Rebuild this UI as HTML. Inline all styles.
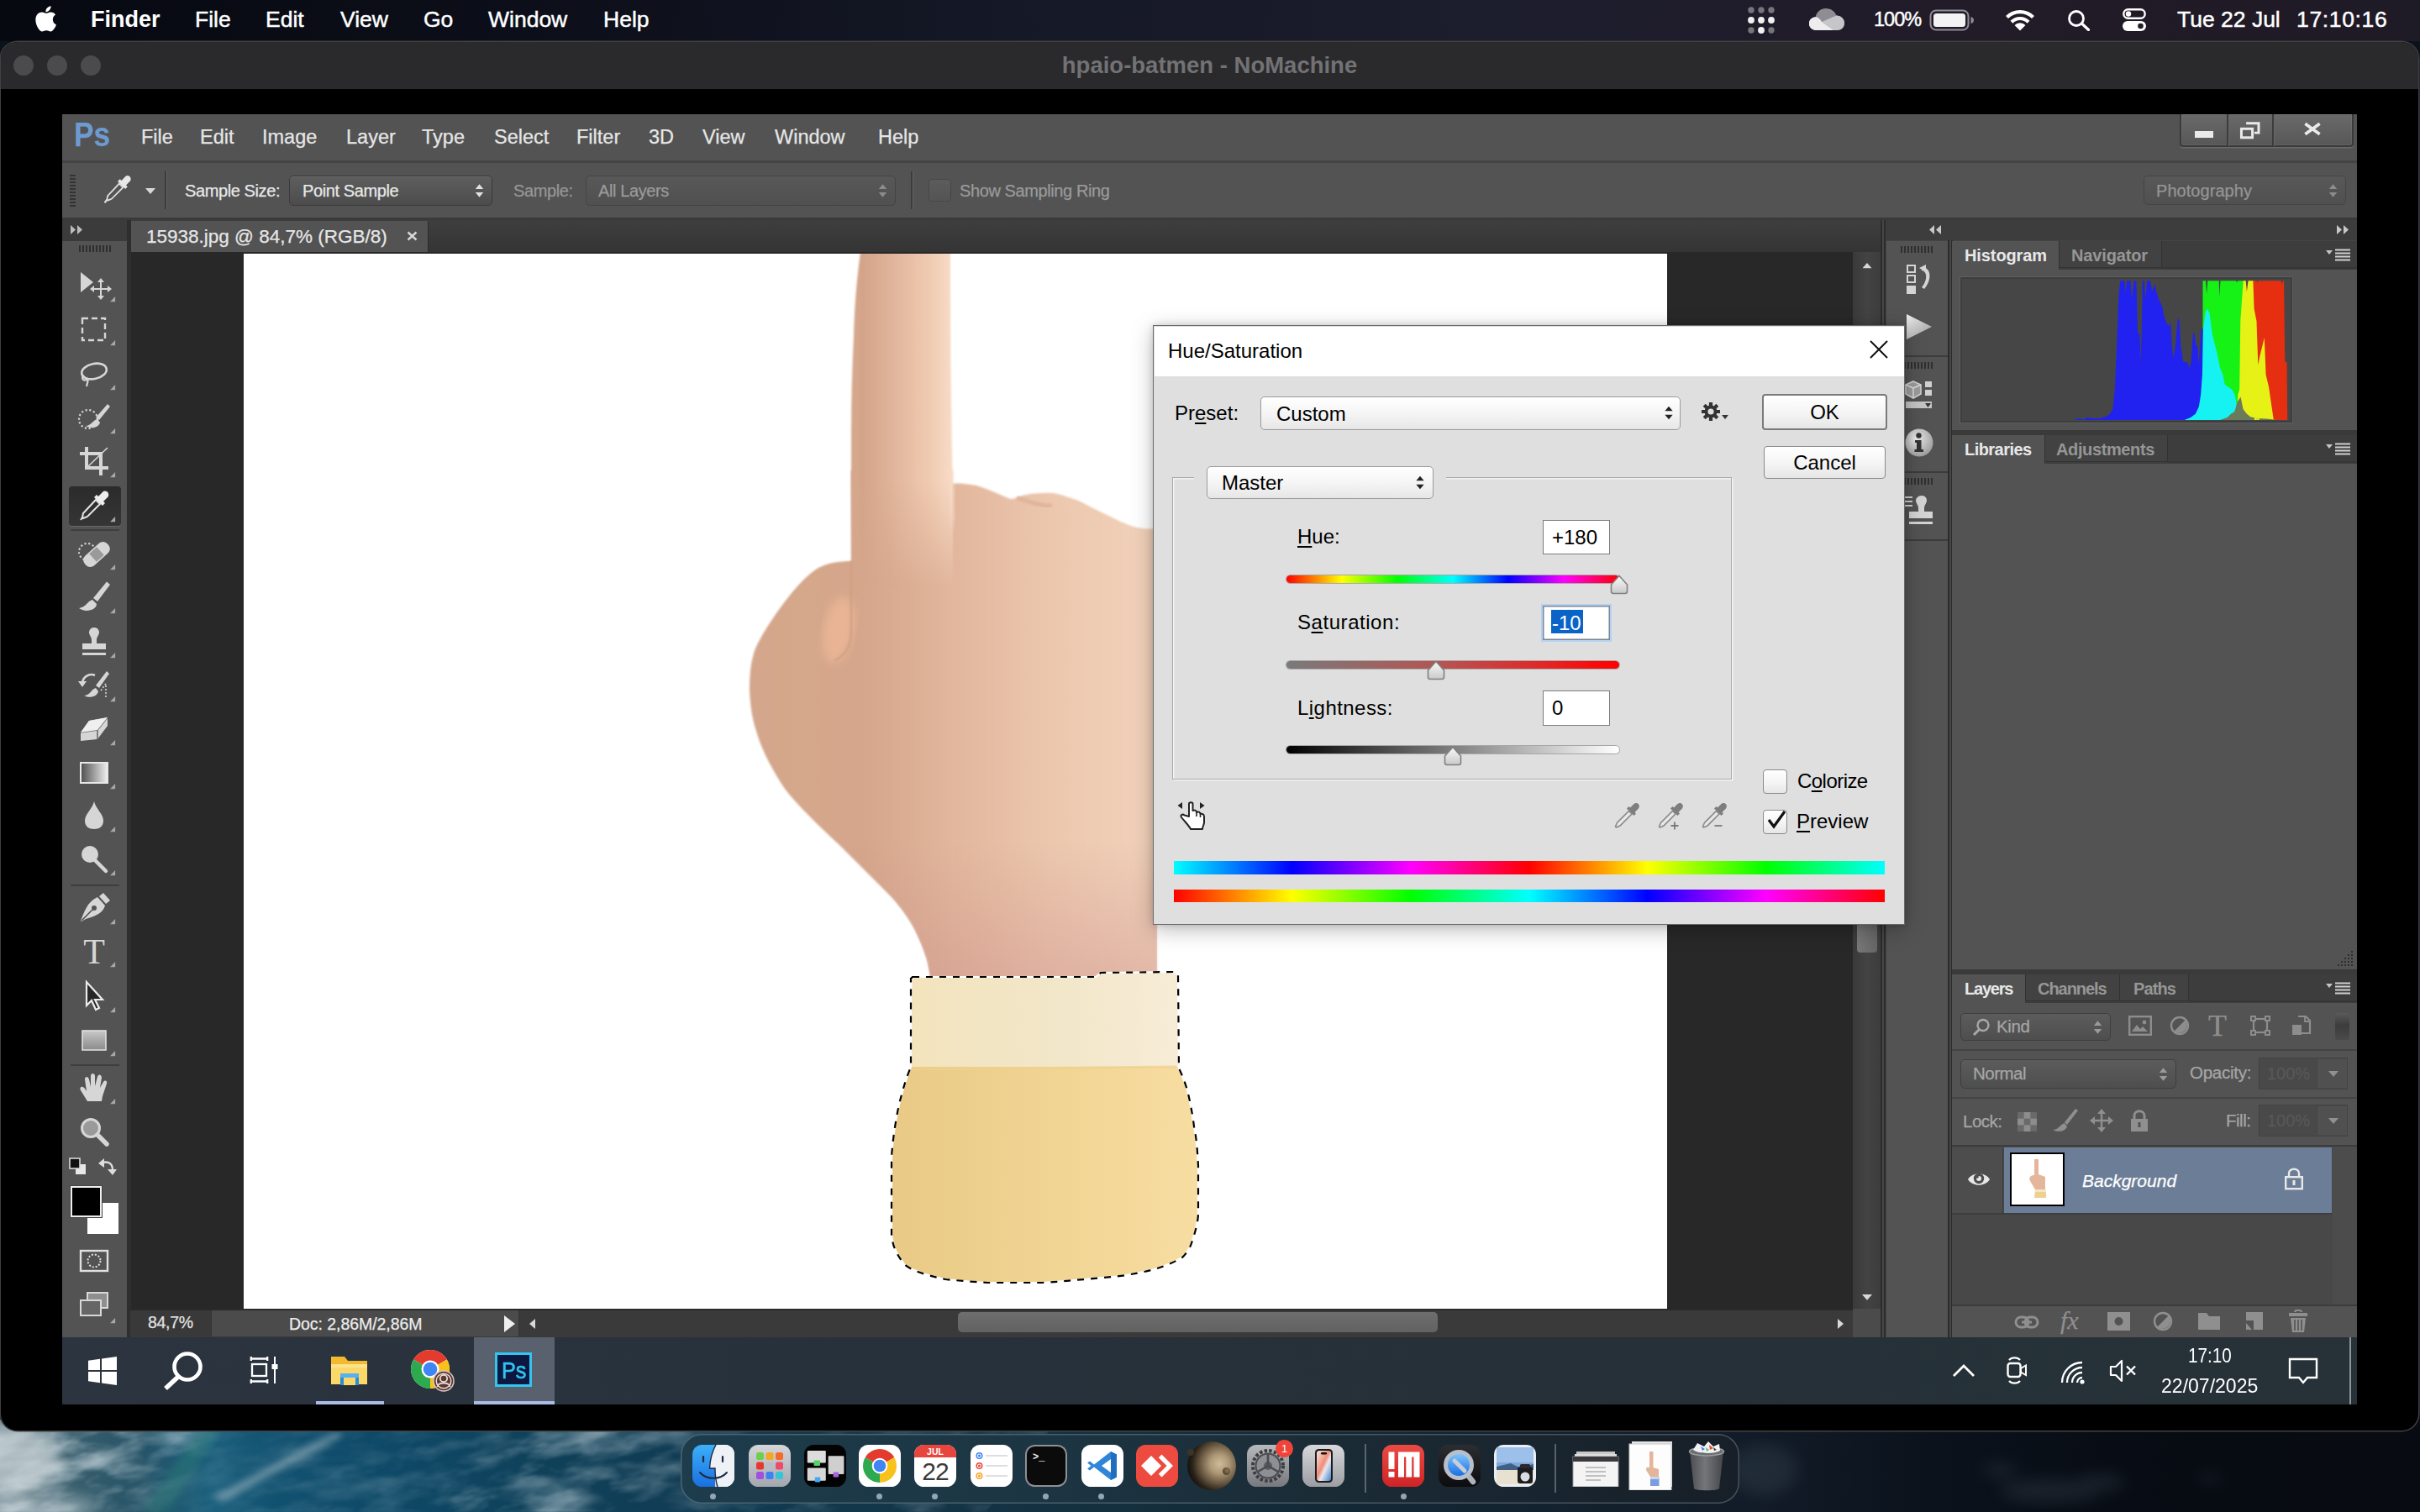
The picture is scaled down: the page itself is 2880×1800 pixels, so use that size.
<!DOCTYPE html>
<html><head><meta charset="utf-8"><title>ps</title>
<style>
*{box-sizing:border-box;margin:0;padding:0}
html,body{width:2880px;height:1800px;overflow:hidden;background:#0a1018;font-family:"Liberation Sans",sans-serif}
.a{position:absolute}
.t{position:absolute;white-space:nowrap;line-height:1}
/* mac */
#wall{left:0;top:0;width:2880px;height:1800px;background:#0b121c}
#macbar{left:0;top:0;width:2880px;height:49px;background:linear-gradient(90deg,#070911 0%,#0c0e19 22%,#151826 42%,#1c1d2d 62%,#221b28 82%,#1e1a26 100%)}
#macbar .t{color:#fff;font-size:26.5px;top:10px;-webkit-text-stroke:.45px #fff}
#nm{left:1px;top:50px;width:2877px;height:1653px;background:#000;border-radius:20px;overflow:hidden;box-shadow:0 0 0 1.5px #414143}
#nmtitle{left:0;top:0;width:100%;height:56px;background:#2a2a2c}
.tl{width:24px;height:24px;border-radius:50%;background:#4b4b4d;top:16px}
/* ps */
#ps{left:74px;top:136px;width:2731px;height:1536px;background:#535353;overflow:hidden}
#ps .t{color:#dcdcdc}
</style></head><body>
<div id="wall" class="a"></div>
<div class="a" style="left:0;top:1690px;width:2880px;height:110px;overflow:hidden;background:linear-gradient(90deg,#5b7480 0,#3a5e6c 70px,#265468 170px,#1a5f7c 250px,#115170 330px,#0e4866 480px,#0f415a 640px,#113c54 811px,#14303e 1300px,#121c28 2068px,#0b121c 2300px,#070b12 2600px,#080b12 2880px)">
<svg class="a" style="left:0;top:0" width="2880" height="110" viewBox="0 0 2880 110"><defs>
<filter id="cl1" x="0" y="0" width="100%" height="100%"><feTurbulence type="fractalNoise" baseFrequency="0.011 0.03" numOctaves="5" seed="7"/><feColorMatrix type="matrix" values="0 0 0 0 0.72  0 0 0 0 0.80  0 0 0 0 0.83  2.300 0 0 0 -1.020"/><feGaussianBlur stdDeviation="1.200"/></filter>
<filter id="cl2" x="0" y="0" width="100%" height="100%"><feTurbulence type="fractalNoise" baseFrequency="0.02 0.045" numOctaves="4" seed="3"/><feColorMatrix type="matrix" values="0 0 0 0 0.55  0 0 0 0 0.66  0 0 0 0 0.72  2.200 0 0 0 -1.080"/><feGaussianBlur stdDeviation="1"/></filter>
<filter id="wb2"><feGaussianBlur stdDeviation="4"/></filter><filter id="wb"><feGaussianBlur stdDeviation="9"/></filter>
<linearGradient id="m1g" gradientUnits="userSpaceOnUse" x1="0" y1="0" x2="820" y2="0"><stop offset="0" stop-color="#fff"/><stop offset=".1" stop-color="#ddd"/><stop offset=".2" stop-color="#888"/><stop offset=".27" stop-color="#222"/><stop offset=".5" stop-color="#333"/><stop offset=".62" stop-color="#444"/><stop offset=".72" stop-color="#8a8a8a"/><stop offset=".88" stop-color="#7a7a7a"/><stop offset="1" stop-color="#444"/></linearGradient>
<mask id="m1" maskUnits="userSpaceOnUse" x="-200" y="0" width="1400" height="110"><rect x="-200" width="1400" height="110" fill="url(#m1g)"/></mask>
</defs>
<g transform="skewX(-38)"><g transform="translate(60 0)">
<rect x="-200" y="0" width="1400" height="110" filter="url(#cl1)" mask="url(#m1)"/>
<rect x="-200" y="0" width="1400" height="110" filter="url(#cl2)" mask="url(#m1)" opacity=".8"/>
</g></g>
<g filter="url(#wb)" fill="#c4cfd3"><ellipse cx="10" cy="45" rx="60" ry="40" opacity=".75"/><ellipse cx="50" cy="104" rx="70" ry="16" opacity=".5"/></g>
<path d="M168,110 L238,12 L262,12 L200,110 Z" fill="#2f8078" opacity=".4" filter="url(#wb2)"/>
<g filter="url(#wb2)" fill="#d4dcde"><path d="M252,92 L400,14 L408,19 L266,98 Z" opacity=".42"/></g>
<g filter="url(#wb)" fill="#5a6a78" opacity=".2"><ellipse cx="2440" cy="85" rx="60" ry="14"/><ellipse cx="2500" cy="75" rx="30" ry="10"/><ellipse cx="2380" cy="60" rx="20" ry="8"/><ellipse cx="2630" cy="70" rx="14" ry="6"/><ellipse cx="2100" cy="60" rx="40" ry="30"/></g>
</svg></div>
<div id="macbar" class="a">
<svg class="a" style="left:40px;top:6px" width="30" height="34" viewBox="0 0 170 200"><path fill="#fff" d="M150.4,68.2c-1,0.8-19.2,11-19.2,33.8c0,26.300,23.1,35.600,23.800,35.900c-0.1,0.600-3.700,12.800-12.200,25.200c-7.600,10.900-15.500,21.800-27.600,21.800s-15.200-7-29.100-7c-13.600,0-18.400,7.200-29.400,7.200s-18.700-10.100-27.600-22.500C18.800,147.900,10.500,125,10.500,103.300c0-34.800,22.600-53.300,44.900-53.300c11.800,0,21.700,7.800,29.100,7.800c7.100,0,18.100-8.200,31.600-8.200C121.200,49.600,139.600,50.100,150.400,68.200z M108.500,35.700c5.600-6.600,9.500-15.800,9.500-25c0-1.300-0.100-2.600-0.300-3.600c-9.100,0.300-19.900,6-26.400,13.600c-5.100,5.800-9.900,15-9.900,24.300c0,1.400,0.200,2.800,0.300,3.200c0.600,0.100,1.500,0.200,2.400,0.200C92.200,48.400,102.500,42.900,108.500,35.700z"/></svg>
<div class="t" style="left:108px;font-weight:bold;font-size:27px;-webkit-text-stroke:0">Finder</div>
<div class="t" style="left:232px">File</div>
<div class="t" style="left:316px">Edit</div>
<div class="t" style="left:405px">View</div>
<div class="t" style="left:504px">Go</div>
<div class="t" style="left:581px">Window</div>
<div class="t" style="left:718px">Help</div>
<svg class="a" style="left:2076px;top:4px" width="40" height="40" viewBox="0 0 40 40"><g fill="#77747c"><circle cx="8" cy="8" r="3.7"/><circle cx="20" cy="8" r="3.7"/><circle cx="32" cy="8" r="3.7"/><circle cx="8" cy="32" r="3.7"/><circle cx="32" cy="32" r="3.7"/></g><g fill="#f2f2f2"><circle cx="8" cy="20" r="3.9"/><circle cx="20" cy="20" r="3.9"/><circle cx="32" cy="20" r="3.9"/><circle cx="20" cy="32" r="3.9"/></g></svg>
<svg class="a" style="left:2152px;top:8px" width="44" height="30" viewBox="0 0 44 30"><path d="M10,28 C4,28 1,24 1,20 C1,15.500 4.500,12.500 8.500,12.500 C10,6 15,2 21,2 C27,2 31.500,5.500 33.500,10.500 C39,10.500 43,14.500 43,19.500 C43,24.500 39,28 34,28 Z" fill="#8f8c93"/><path d="M10,28 C4,28 1,24 1,20 C1,16.500 3,14 6,13 L30,28 Z" fill="#e4e4e6"/><path d="M16,18 L33.500,10.500 C39,10.500 43,14.500 43,19.500 C43,24.500 39,28 34,28 L30,28 Z" fill="#c6c5c9"/><path d="M4,14 C8,11 13,12 16,18 L30,28 L10,28 C4,28 1,24 1,20 C1,17 2,15.500 4,14Z" fill="#ededee"/></svg>
<div class="t" style="left:2230px;font-size:23.5px;top:12px;letter-spacing:-1px">100%</div>
<svg class="a" style="left:2296px;top:11px" width="54" height="26" viewBox="0 0 54 26"><rect x="1.500" y="1.500" width="45" height="23" rx="6.500" fill="none" stroke="#8f8d93" stroke-width="2"/><rect x="5" y="5" width="38" height="16" rx="3.500" fill="#f3f3f3"/><path d="M49.500,9 C52,9.500 53,11.500 53,13 C53,14.500 52,16.500 49.500,17 Z" fill="#8f8d93"/></svg>
<svg class="a" style="left:2386px;top:10px" width="36" height="27" viewBox="0 0 36 27"><g fill="none" stroke="#fff" stroke-linecap="butt"><path d="M2.500,10.500 A22,22 0 0 1 33.500,10.500" stroke-width="4.200"/><path d="M8,16.200 A14,14 0 0 1 28,16.200" stroke-width="4.200"/></g><path d="M18,26.500 L11.500,20 A9,9 0 0 1 24.500,20 Z" fill="#fff"/></svg>
<svg class="a" style="left:2460px;top:11px" width="28" height="26" viewBox="0 0 28 26"><circle cx="11" cy="11" r="8.500" fill="none" stroke="#fff" stroke-width="2.800"/><path d="M17.500,17 L25.500,24.500" stroke="#fff" stroke-width="3.200" stroke-linecap="round"/></svg>
<svg class="a" style="left:2526px;top:10px" width="28" height="27" viewBox="0 0 28 27"><rect x="1.300" y="1.300" width="25.400" height="10.400" rx="5.200" fill="none" stroke="#fff" stroke-width="2.400"/><circle cx="7" cy="6.500" r="3.200" fill="#fff"/><rect x="0" y="15" width="28" height="12" rx="6" fill="#fff"/><circle cx="21.500" cy="21" r="3.300" fill="#231d26"/></svg>
<div class="t" style="left:2591px">Tue 22 Jul</div>
<div class="t" style="left:2733px;letter-spacing:.65px">17:10:16</div>

</div>
<div id="nm" class="a">
 <div id="nmtitle" class="a">
  <div class="a tl" style="left:15px"></div><div class="a tl" style="left:55px"></div><div class="a tl" style="left:95px"></div>
  <div class="t" style="left:0;width:100%;text-align:center;top:14px;font-size:27.5px;font-weight:bold;color:#727274">hpaio-batmen - NoMachine</div>
 </div>
</div>
<div id="ps" class="a">
<div class="a" id="pp" style="left:-74px;top:-136px;width:2880px;height:1800px">
<style>
#pp .t{color:#e8e8e8;-webkit-text-stroke:.25px currentColor}
.ln{position:absolute}
.dd{position:absolute;border-radius:5px;border:1.5px solid #3a3a3a;background:linear-gradient(#5e5e5e,#4c4c4c);box-shadow:inset 0 1px 0 #6c6c6c}
.dd2{position:absolute;border-radius:5px;border:1.5px solid #444;background:linear-gradient(#585858,#505050);}
.ptab{position:absolute;font-weight:bold;font-size:20px;color:#e8e8e8;line-height:1;white-space:nowrap}
.ptab2{position:absolute;font-weight:bold;font-size:20px;color:#969696;line-height:1;white-space:nowrap}
</style>
<!-- menu bar -->
<div class="a" style="left:74px;top:136px;width:2731px;height:56px;background:#535353"></div>
<div class="a" style="left:74px;top:191px;width:2731px;height:3px;background:#444"></div>
<div class="t" style="left:88px;top:140px;font-size:40px;font-weight:bold;color:#6d9bd1;transform:scaleX(.88);transform-origin:0 0">Ps</div>
<div class="t ml" style="left:168px">File</div>
<div class="t ml" style="left:238px">Edit</div>
<div class="t ml" style="left:312px">Image</div>
<div class="t ml" style="left:412px">Layer</div>
<div class="t ml" style="left:502px">Type</div>
<div class="t ml" style="left:588px">Select</div>
<div class="t ml" style="left:686px">Filter</div>
<div class="t ml" style="left:772px">3D</div>
<div class="t ml" style="left:836px">View</div>
<div class="t ml" style="left:922px">Window</div>
<div class="t ml" style="left:1045px">Help</div>
<style>.ml{top:152px;font-size:23.5px;color:#e6e6e6 !important;-webkit-text-stroke:.3px #e6e6e6}</style>
<!-- options bar -->
<div class="a" style="left:74px;top:194px;width:2731px;height:66px;background:#535353"></div>
<div class="a" style="left:74px;top:259px;width:2731px;height:3px;background:#3a3a3a"></div>
<!-- tab row -->
<div class="a" style="left:74px;top:262px;width:2170px;height:39px;background:linear-gradient(#3e3e3e,#343434)"></div>
<div class="a" style="left:156px;top:263px;width:354px;height:38px;background:#535353;border-right:1px solid #2c2c2c"></div>
<div class="t" style="left:174px;top:271px;font-size:22.5px;color:#e6e6e6">15938.jpg @ 84,7% (RGB/8)</div>
<!-- canvas area -->
<div class="a" style="left:155px;top:300px;width:2084px;height:1258px;background:#282828"></div>
<div class="a" style="left:290px;top:302px;width:1694px;height:1256px;background:#fff"></div>
<svg class="a" style="left:290px;top:302px" width="1694" height="1256" viewBox="290 302 1694 1256">
<defs>
<linearGradient id="gsk" gradientUnits="userSpaceOnUse" x1="892" y1="0" x2="1380" y2="0">
<stop offset="0" stop-color="#d4a78c"/><stop offset=".28" stop-color="#d5a68b"/><stop offset=".5" stop-color="#e2b79d"/><stop offset=".75" stop-color="#ecc8af"/><stop offset="1" stop-color="#f2d2bb"/></linearGradient>
<linearGradient id="gfi" gradientUnits="userSpaceOnUse" x1="1012" y1="0" x2="1134" y2="0">
<stop offset="0" stop-color="#d6a98e"/><stop offset=".12" stop-color="#d3a489"/><stop offset=".45" stop-color="#e2b79d"/><stop offset=".8" stop-color="#f1cdb4"/><stop offset="1" stop-color="#f8dcc8"/></linearGradient>
<linearGradient id="gwr" gradientUnits="userSpaceOnUse" x1="0" y1="1000" x2="0" y2="1165">
<stop offset="0" stop-color="#c98c88" stop-opacity="0"/><stop offset="1" stop-color="#c98c88" stop-opacity=".38"/></linearGradient>
<linearGradient id="gcu" gradientUnits="userSpaceOnUse" x1="1085" y1="0" x2="1402" y2="0">
<stop offset="0" stop-color="#f3e4bd"/><stop offset=".5" stop-color="#f2e6c8"/><stop offset="1" stop-color="#f7ecd6"/></linearGradient>
<linearGradient id="gsl" gradientUnits="userSpaceOnUse" x1="1060" y1="0" x2="1427" y2="0">
<stop offset="0" stop-color="#e9c985"/><stop offset=".5" stop-color="#f0d493"/><stop offset="1" stop-color="#f8dda2"/></linearGradient>
<radialGradient id="gcr" gradientUnits="userSpaceOnUse" cx="1000" cy="760" r="34">
<stop offset="0" stop-color="#f6bf9e" stop-opacity=".95"/><stop offset="1" stop-color="#f6bf9e" stop-opacity="0"/></radialGradient>
<linearGradient id="gfm" gradientUnits="userSpaceOnUse" x1="0" y1="570" x2="0" y2="700"><stop offset="0" stop-color="#fff"/><stop offset="1" stop-color="#000"/></linearGradient>
<mask id="mfi" maskUnits="userSpaceOnUse" x="900" y="290" width="400" height="600"><rect x="900" y="290" width="400" height="600" fill="url(#gfm)"/></mask>
<filter id="bl2"><feGaussianBlur stdDeviation="1.2"/></filter>
<filter id="bl6"><feGaussianBlur stdDeviation="6"/></filter>
</defs>
<g filter="url(#bl2)">
<!-- palm + thumb -->
<path fill="url(#gsk)" d="M1013,668 C1000,668 985,670 974,676 C960,684 945,702 935,715 C925,728 908,752 899,772 C893,788 892,805 892,822 C893,845 897,862 900,870 C905,888 915,910 934,939 C950,960 980,988 998,1005 L1061,1068 C1072,1080 1080,1092 1085,1100 C1094,1116 1101,1135 1104,1145 L1107,1163 L1377,1163 L1377,629 C1366,630 1354,629 1346,626 C1330,620 1312,610 1299,604 C1288,598 1280,594 1271,592 C1262,588 1252,586 1243,587 C1232,587 1224,588 1217,590 C1211,592 1207,594 1203,594 C1196,592 1190,588 1181,585 C1172,581 1164,578 1156,577 C1148,576 1140,575 1133,576 L1133,560 L1013,560 Z"/>
<!-- finger -->
</g>
<g mask="url(#mfi)"><path filter="url(#bl2)" fill="url(#gfi)" d="M1024,300 C1020,330 1017,360 1016,400 C1014,440 1013,480 1013,520 L1013,760 L1134,760 L1134,576 C1132,500 1131,400 1131,300 Z"/></g>
<!-- crease highlight -->
<ellipse filter="url(#bl6)" cx="998" cy="750" rx="18" ry="40" fill="#f5bd9c" opacity=".62" transform="rotate(10 998 750)"/>
<path filter="url(#bl2)" d="M1013,668 L1013,752 C1013,770 1004,782 993,786" fill="none" stroke="#d09f84" stroke-width="3" opacity=".8"/>
<path filter="url(#bl6)" d="M1131,560 L1136,625" fill="none" stroke="#f9e0cf" stroke-width="6" opacity=".7"/>
<path filter="url(#bl2)" d="M1210,592 C1225,598 1240,603 1252,602" fill="none" stroke="#dcae94" stroke-width="5" opacity=".7"/>
<!-- wrist pink shading -->
<path fill="url(#gwr)" d="M1000,1000 L1377,1000 L1377,1163 L1107,1163 C1100,1120 1080,1090 1061,1068 Z"/>

<!-- cuff -->
<path fill="url(#gcu)" d="M1086,1163 L1304,1163 L1310,1158 L1398,1157 L1402,1160 L1403,1272 L1084,1272 L1084,1200 Z"/>
<!-- sleeve -->
<path fill="url(#gsl)" d="M1084,1270 C1078,1285 1074,1298 1070,1315 C1066,1332 1062,1360 1061,1378 L1061,1470 C1062,1482 1066,1492 1076,1505 C1084,1512 1098,1517 1125,1523 C1145,1525 1160,1526 1175,1527 L1241,1527 C1262,1526 1275,1524 1291,1523 C1310,1521 1328,1520 1340,1518 C1358,1515 1372,1512 1383,1508 C1394,1504 1402,1500 1407,1497 C1412,1492 1416,1486 1418,1480 C1422,1468 1426,1455 1426,1444 L1426,1388 C1425,1370 1424,1355 1421,1341 C1419,1325 1416,1310 1413,1298 C1410,1288 1407,1280 1403,1270 Z"/>
<path d="M1086,1273 L1400,1270" stroke="#efd08c" stroke-width="3" fill="none" opacity=".7"/>
<!-- marching ants -->
<g fill="none" stroke-width="2.2">
<path id="ants" stroke="#fff" d="M1086,1163 L1304,1163 L1310,1158 L1398,1157 L1402,1160 L1403,1272 C1407,1280 1410,1288 1413,1298 C1416,1310 1419,1325 1421,1341 C1424,1355 1425,1370 1426,1388 L1426,1444 C1426,1455 1422,1468 1418,1480 C1416,1486 1412,1492 1407,1497 C1402,1500 1394,1504 1383,1508 C1372,1512 1358,1515 1340,1518 C1328,1520 1310,1521 1291,1523 C1275,1524 1262,1526 1241,1527 L1175,1527 C1160,1526 1145,1525 1125,1523 C1098,1517 1084,1512 1076,1505 C1066,1492 1062,1482 1061,1470 L1061,1378 C1062,1360 1066,1332 1070,1315 C1074,1298 1078,1285 1084,1270 L1084,1165 Z"/>
<path stroke="#000" stroke-dasharray="8 8" d="M1086,1163 L1304,1163 L1310,1158 L1398,1157 L1402,1160 L1403,1272 C1407,1280 1410,1288 1413,1298 C1416,1310 1419,1325 1421,1341 C1424,1355 1425,1370 1426,1388 L1426,1444 C1426,1455 1422,1468 1418,1480 C1416,1486 1412,1492 1407,1497 C1402,1500 1394,1504 1383,1508 C1372,1512 1358,1515 1340,1518 C1328,1520 1310,1521 1291,1523 C1275,1524 1262,1526 1241,1527 L1175,1527 C1160,1526 1145,1525 1125,1523 C1098,1517 1084,1512 1076,1505 C1066,1492 1062,1482 1061,1470 L1061,1378 C1062,1360 1066,1332 1070,1315 C1074,1298 1078,1285 1084,1270 L1084,1165 Z"/>
</g>

</svg>

<!-- vscroll -->
<div class="a" style="left:2205px;top:300px;width:34px;height:1258px;background:linear-gradient(90deg,#3a3a3a,#434343 50%,#3c3c3c)"></div>
<!-- status bar -->
<div class="a" style="left:155px;top:1558px;width:2084px;height:34px;background:#3a3a3a"></div>
<!-- toolbox -->
<div class="a" style="left:74px;top:262px;width:78px;height:1330px;background:#535353"></div>
<div class="a" style="left:74px;top:262px;width:78px;height:24px;background:#3b3b3b"></div>
<div class="a" style="left:151px;top:262px;width:5px;height:1330px;background:#2e2e2e"></div>
<svg class="a" style="left:84px;top:268px" width="16" height="11" viewBox="0 0 16 11"><path d="M0,0 L6,5.5 L0,11 Z M8,0 L14,5.5 L8,11 Z" fill="#bdbdbd"/></svg>
<div class="a" style="left:74px;top:285px;width:78px;height:2px;background:#3a3a3a"></div>
<div class="a" style="left:94px;top:292px;width:39px;height:8px;background:repeating-linear-gradient(90deg,#2f2f2f 0 2px,transparent 2px 4px)"></div>
<div class="a" style="left:82px;top:579px;width:62px;height:47px;background:linear-gradient(#2b2b2b,#353535);border-radius:4px;box-shadow:0 1px 0 #666"></div>
<div class="a" style="left:84px;top:630px;width:58px;height:2px;background:#3e3e3e"></div>
<div class="a" style="left:84px;top:1053px;width:58px;height:2px;background:#3e3e3e"></div>
<div class="a" style="left:84px;top:1267px;width:58px;height:2px;background:#3e3e3e"></div>
<svg class="a" style="left:90px;top:318px" width="44" height="44" viewBox="0 0 44 44"><path d="M6,6 L6,30 L21,18 Z" fill="#d6d6d6"/><g stroke="#d6d6d6" stroke-width="2" fill="none"><path d="M30,16 V36 M20,26 H40"/></g><path d="M30,13 L34,18 H26 Z M30,39 L34,34 H26 Z M17,26 L22,22 V30 Z M43,26 L38,22 V30 Z" fill="#d6d6d6"/></svg>
<svg class="a" style="left:131px;top:353px" width="7" height="7" viewBox="0 0 8 8"><path d="M7,0 V7 H0 Z" fill="#a8a8a8"/></svg>
<svg class="a" style="left:90px;top:370px" width="44" height="44" viewBox="0 0 44 44"><rect x="8" y="9" width="27" height="26" fill="none" stroke="#d6d6d6" stroke-width="2.4" stroke-dasharray="7 4"/></svg>
<svg class="a" style="left:131px;top:405px" width="7" height="7" viewBox="0 0 8 8"><path d="M7,0 V7 H0 Z" fill="#a8a8a8"/></svg>
<svg class="a" style="left:90px;top:423px" width="44" height="44" viewBox="0 0 44 44"><ellipse cx="22" cy="19" rx="15" ry="9" fill="none" stroke="#d6d6d6" stroke-width="2.6" transform="rotate(-12 22 19)"/><path d="M10,24 C6,27 9,31 13,29 C16,27 14,33 13,37" fill="none" stroke="#d6d6d6" stroke-width="2.2"/></svg>
<svg class="a" style="left:131px;top:458px" width="7" height="7" viewBox="0 0 8 8"><path d="M7,0 V7 H0 Z" fill="#a8a8a8"/></svg>
<svg class="a" style="left:90px;top:475px" width="44" height="44" viewBox="0 0 44 44"><circle cx="15" cy="24" r="11" fill="none" stroke="#d6d6d6" stroke-width="2.2" stroke-dasharray="2.2 2.6"/><path d="M41,9 L38,6 L24,22 L28,25 Z" fill="#d6d6d6"/><path d="M12,32 C18,32 22,24 26,24 L29,28 C28,34 18,36 12,32 Z" fill="#d6d6d6"/></svg>
<svg class="a" style="left:131px;top:510px" width="7" height="7" viewBox="0 0 8 8"><path d="M7,0 V7 H0 Z" fill="#a8a8a8"/></svg>
<svg class="a" style="left:90px;top:527px" width="44" height="44" viewBox="0 0 44 44"><g stroke="#d6d6d6" stroke-width="4" fill="none"><path d="M13,5 V30 H39 M5,13 H30 V39"/></g><path d="M14,29 L38,6" stroke="#d6d6d6" stroke-width="1.6"/></svg>
<svg class="a" style="left:131px;top:562px" width="7" height="7" viewBox="0 0 8 8"><path d="M7,0 V7 H0 Z" fill="#a8a8a8"/></svg>
<svg class="a" style="left:90px;top:580px" width="44" height="44" viewBox="0 0 44 44"><path d="M37,5 C40,7 40,11 37,13 L33,17 L35,19 L32,22 L22,12 L25,9 L27,11 L31,7 C33,4 35,4 37,5 Z" fill="#eee"/><path d="M24,15 L29,20 L14,35 L9,37 L8,36 L9,31 Z" fill="none" stroke="#e6e6e6" stroke-width="2"/><path d="M8,36 L6,39" stroke="#e6e6e6" stroke-width="2"/></svg>
<svg class="a" style="left:131px;top:615px" width="7" height="7" viewBox="0 0 8 8"><path d="M7,0 V7 H0 Z" fill="#a8a8a8"/></svg>
<svg class="a" style="left:90px;top:637px" width="44" height="44" viewBox="0 0 44 44"><circle cx="14" cy="20" r="10" fill="none" stroke="#d6d6d6" stroke-width="2" stroke-dasharray="2.2 2.6"/><g transform="rotate(-42 25 23)"><rect x="7" y="15" width="36" height="16" rx="7" fill="#d6d6d6"/><rect x="19" y="16.500" width="12" height="13" fill="#9a9a9a"/></g></svg>
<svg class="a" style="left:131px;top:672px" width="7" height="7" viewBox="0 0 8 8"><path d="M7,0 V7 H0 Z" fill="#a8a8a8"/></svg>
<svg class="a" style="left:90px;top:689px" width="44" height="44" viewBox="0 0 44 44"><path d="M41,7 L37,3.500 L21,23 L26,27 Z" fill="#d6d6d6"/><path d="M4,35 C12,34 15,26 20,25 L25,30 C25,37 12,41 4,35 Z" fill="#d6d6d6"/></svg>
<svg class="a" style="left:131px;top:724px" width="7" height="7" viewBox="0 0 8 8"><path d="M7,0 V7 H0 Z" fill="#a8a8a8"/></svg>
<svg class="a" style="left:90px;top:742px" width="44" height="44" viewBox="0 0 44 44"><path d="M22,5 C26,5 28,8 28,11 C28,14 25,16 25,20 L25,24 L36,24 L36,31 L8,31 L8,24 L19,24 L19,20 C19,16 16,14 16,11 C16,8 18,5 22,5 Z" fill="#d6d6d6"/><rect x="8" y="35" width="28" height="3" fill="#d6d6d6"/></svg>
<svg class="a" style="left:131px;top:777px" width="7" height="7" viewBox="0 0 8 8"><path d="M7,0 V7 H0 Z" fill="#a8a8a8"/></svg>
<svg class="a" style="left:90px;top:794px" width="44" height="44" viewBox="0 0 44 44"><path d="M40,8 L37,5 L24,22 L28,25 Z" fill="#d6d6d6"/><path d="M10,34 C17,34 19,26 24,25 L27,29 C26,35 17,38 10,34 Z" fill="#d6d6d6"/><path d="M8,20 C8,12 16,7 23,10" fill="none" stroke="#d6d6d6" stroke-width="2.6"/><path d="M3,17 L13,17 L8,24 Z" fill="#d6d6d6"/><path d="M30,28 L36,20 L36,36" fill="none" stroke="#d6d6d6" stroke-width="1.6" stroke-dasharray="2 2"/></svg>
<svg class="a" style="left:131px;top:829px" width="7" height="7" viewBox="0 0 8 8"><path d="M7,0 V7 H0 Z" fill="#a8a8a8"/></svg>
<svg class="a" style="left:90px;top:846px" width="44" height="44" viewBox="0 0 44 44"><path d="M16,12 L38,8 L38,18 L26,34 L6,36 L6,26 Z" fill="#d6d6d6"/><path d="M6,26 L26,23 L38,8 M26,23 L26,34" stroke="#6a6a6a" stroke-width="1.6" fill="none"/><path d="M16,12 L38,8 L26,23 L6,26 Z" fill="#efefef"/></svg>
<svg class="a" style="left:131px;top:881px" width="7" height="7" viewBox="0 0 8 8"><path d="M7,0 V7 H0 Z" fill="#a8a8a8"/></svg>
<svg class="a" style="left:90px;top:898px" width="44" height="44" viewBox="0 0 44 44"><defs><linearGradient id="tg1" x1="0" x2="1"><stop offset="0" stop-color="#4e4e4e"/><stop offset="1" stop-color="#f0f0f0"/></linearGradient></defs><rect x="6" y="10" width="32" height="24" fill="url(#tg1)" stroke="#e8e8e8" stroke-width="2"/></svg>
<svg class="a" style="left:131px;top:933px" width="7" height="7" viewBox="0 0 8 8"><path d="M7,0 V7 H0 Z" fill="#a8a8a8"/></svg>
<svg class="a" style="left:90px;top:949px" width="44" height="44" viewBox="0 0 44 44"><path d="M22,5 C24,14 33,20 33,28 C33,35 28,38 22,38 C16,38 11,35 11,28 C11,20 20,14 22,5 Z" fill="#d6d6d6"/></svg>
<svg class="a" style="left:131px;top:984px" width="7" height="7" viewBox="0 0 8 8"><path d="M7,0 V7 H0 Z" fill="#a8a8a8"/></svg>
<svg class="a" style="left:90px;top:1001px" width="44" height="44" viewBox="0 0 44 44"><circle cx="17" cy="16" r="10" fill="#d6d6d6"/><path d="M23,23 L36,36" stroke="#d6d6d6" stroke-width="4.500" stroke-linecap="round"/></svg>
<svg class="a" style="left:131px;top:1036px" width="7" height="7" viewBox="0 0 8 8"><path d="M7,0 V7 H0 Z" fill="#a8a8a8"/></svg>
<svg class="a" style="left:90px;top:1059px" width="44" height="44" viewBox="0 0 44 44"><path d="M33,4 L41,13 L36,17 L28,8 Z" fill="#d6d6d6"/><path d="M26,9 L35,19 C33,27 26,31 12,35 L7,38 L6,37 C10,28 13,15 26,9 Z" fill="#d6d6d6"/><circle cx="22" cy="22" r="3" fill="#535353"/><path d="M7,37 L20,24" stroke="#535353" stroke-width="1.600"/></svg>
<svg class="a" style="left:131px;top:1094px" width="7" height="7" viewBox="0 0 8 8"><path d="M7,0 V7 H0 Z" fill="#a8a8a8"/></svg>
<svg class="a" style="left:90px;top:1110px" width="44" height="44" viewBox="0 0 44 44"><text x="22" y="37" text-anchor="middle" font-family="Liberation Serif" font-size="42" fill="#d6d6d6">T</text></svg>
<svg class="a" style="left:131px;top:1145px" width="7" height="7" viewBox="0 0 8 8"><path d="M7,0 V7 H0 Z" fill="#a8a8a8"/></svg>
<svg class="a" style="left:90px;top:1164px" width="44" height="44" viewBox="0 0 44 44"><path d="M13,5 L13,33 L19,27 L24,38 L28,36 L23,26 L32,26 Z" fill="#262626" stroke="#ececec" stroke-width="2.200" stroke-linejoin="miter"/></svg>
<svg class="a" style="left:131px;top:1199px" width="7" height="7" viewBox="0 0 8 8"><path d="M7,0 V7 H0 Z" fill="#a8a8a8"/></svg>
<svg class="a" style="left:90px;top:1216px" width="44" height="44" viewBox="0 0 44 44"><defs><linearGradient id="tg2" x1="0" y1="0" x2="0" y2="1"><stop offset="0" stop-color="#c8c8c8"/><stop offset="1" stop-color="#8a8a8a"/></linearGradient></defs><rect x="8" y="11" width="28" height="23" fill="url(#tg2)" stroke="#e0e0e0" stroke-width="1.6"/></svg>
<svg class="a" style="left:131px;top:1251px" width="7" height="7" viewBox="0 0 8 8"><path d="M7,0 V7 H0 Z" fill="#a8a8a8"/></svg>
<svg class="a" style="left:90px;top:1273px" width="44" height="44" viewBox="0 0 44 44"><path d="M14,38 L6,25 C4,21 8,19 11,23 L13,26 L11,12 C11,8 15,8 16,12 L18,21 L18,8 C18,4 23,4 23,8 L23,20 L26,9 C27,5 31,6 31,10 L29,22 L33,15 C35,12 38,14 37,17 L32,32 L31,38 Z" fill="#d6d6d6"/></svg>
<svg class="a" style="left:131px;top:1308px" width="7" height="7" viewBox="0 0 8 8"><path d="M7,0 V7 H0 Z" fill="#a8a8a8"/></svg>
<svg class="a" style="left:90px;top:1326px" width="44" height="44" viewBox="0 0 44 44"><circle cx="18" cy="17" r="10.500" fill="#9a9a9a" stroke="#d6d6d6" stroke-width="3"/><path d="M26,25 L37,36" stroke="#d6d6d6" stroke-width="5.500" stroke-linecap="round"/></svg>
<svg class="a" style="left:82px;top:1378px" width="22" height="22" viewBox="0 0 22 22"><rect x="8" y="8" width="12" height="12" fill="#e8e8e8"/><rect x="1" y="1" width="12" height="12" fill="#111" stroke="#d8d8d8" stroke-width="1.600"/></svg>
<svg class="a" style="left:116px;top:1376px" width="24" height="24" viewBox="0 0 24 24"><path d="M6,8 C14,6 18,10 18,17" fill="none" stroke="#ddd" stroke-width="2.400"/><path d="M1,9 L8,3 L8,14 Z M18,23 L12,16 L23,16 Z" fill="#ddd"/></svg>
<div class="a" style="left:104px;top:1432px;width:37px;height:37px;background:#fff"></div>
<div class="a" style="left:84px;top:1412px;width:37px;height:37px;background:#000;border:2px solid #efefef;box-shadow:0 0 0 1px #444"></div>
<svg class="a" style="left:90px;top:1479px" width="44" height="44" viewBox="0 0 44 44"><rect x="6" y="10" width="32" height="24" fill="none" stroke="#e0e0e0" stroke-width="2.400"/><circle cx="22" cy="22" r="7.500" fill="none" stroke="#e0e0e0" stroke-width="2" stroke-dasharray="2 2"/></svg>
<svg class="a" style="left:90px;top:1530px" width="44" height="44" viewBox="0 0 44 44"><rect x="14" y="9" width="24" height="18" fill="#8f8f8f" stroke="#d8d8d8" stroke-width="2"/><rect x="6" y="18" width="24" height="18" fill="#666" stroke="#d8d8d8" stroke-width="2"/></svg>
<svg class="a" style="left:131px;top:1569px" width="7" height="7" viewBox="0 0 8 8"><path d="M7,0 V7 H0 Z" fill="#a8a8a8"/></svg>
<!-- options bar contents -->
<div class="a" style="left:83px;top:208px;width:7px;height:40px;background:repeating-linear-gradient(180deg,#333 0 2px,transparent 2px 4px)"></div>
<svg class="a" style="left:120px;top:205px" width="40" height="40" viewBox="0 0 44 44"><path d="M37,5 C40,7 40,11 37,13 L33,17 L35,19 L32,22 L22,12 L25,9 L27,11 L31,7 C33,4 35,4 37,5 Z" fill="#e8e8e8"/><path d="M24,15 L29,20 L14,35 L9,37 L8,36 L9,31 Z" fill="none" stroke="#dedede" stroke-width="2"/><path d="M8,36 L5,40" stroke="#dedede" stroke-width="2.400"/></svg>
<svg class="a" style="left:173px;top:224px" width="12" height="8" viewBox="0 0 12 8"><path d="M0,0 H12 L6,7 Z" fill="#d8d8d8"/></svg>
<div class="a" style="left:196px;top:204px;width:2px;height:45px;background:#3c3c3c;box-shadow:1px 0 0 #636363"></div>
<div class="t ol" style="left:220px">Sample Size:</div>
<div class="dd" style="left:344px;top:209px;width:242px;height:36px"></div>
<div class="t ol" style="left:360px">Point Sample</div>
<svg class="a ar" style="left:565px;top:218px" width="11" height="18" viewBox="0 0 14 22"><path d="M7,1 L13,8.500 H1 Z M7,21 L13,13.500 H1 Z" fill="#e2e2e2"/></svg>
<div class="t ol" style="left:611px;color:#969696">Sample:</div>
<div class="dd2" style="left:697px;top:209px;width:369px;height:36px"></div>
<div class="t ol" style="left:712px;color:#9a9a9a">All Layers</div>
<svg class="a ar" style="left:1045px;top:218px" width="11" height="18" viewBox="0 0 14 22"><path d="M7,1 L13,8.500 H1 Z M7,21 L13,13.500 H1 Z" fill="#8c8c8c"/></svg>
<div class="a" style="left:1084px;top:204px;width:2px;height:45px;background:#3c3c3c;box-shadow:1px 0 0 #636363"></div>
<div class="a" style="left:1105px;top:213px;width:27px;height:27px;border-radius:4px;border:1.500px solid #474747;background:linear-gradient(#5c5c5c,#545454)"></div>
<div class="t ol" style="left:1142px;color:#9a9a9a">Show Sampling Ring</div>
<style>.ol{top:217px;font-size:20px;letter-spacing:-.4px}</style>
<!-- window controls -->
<div class="a" style="left:2594px;top:134px;width:207px;height:41px;border:2px solid #3a3a3a;border-radius:0 0 4px 4px;background:linear-gradient(#6a6a6a,#575757);box-shadow:0 1.500px 0 #6a6a6a, inset 0 0 0 1px rgba(255,255,255,.06)"></div>
<div class="a" style="left:2650px;top:136px;width:2px;height:38px;background:#3c3c3c;box-shadow:1px 0 0 #666"></div>
<div class="a" style="left:2704px;top:136px;width:2px;height:38px;background:#3c3c3c;box-shadow:1px 0 0 #666"></div>
<div class="a" style="left:2612px;top:156px;width:22px;height:8px;background:#eaeaea"></div>
<svg class="a" style="left:2665px;top:145px" width="25" height="21" viewBox="0 0 28 24"><path d="M9,2 H26 V15 H20" fill="none" stroke="#eaeaea" stroke-width="3.400"/><rect x="2.500" y="9.500" width="15" height="12" fill="none" stroke="#eaeaea" stroke-width="3.400"/></svg>
<svg class="a" style="left:2741px;top:145px" width="22" height="17" viewBox="0 0 28 20"><path d="M3,2 L25,18 M25,2 L3,18" stroke="#eaeaea" stroke-width="4.600" fill="none"/></svg>
<!-- workspace -->
<div class="dd2" style="left:2551px;top:209px;width:241px;height:35px"></div>
<div class="t ol" style="left:2566px;color:#959595;letter-spacing:.05px">Photography</div>
<svg class="a ar" style="left:2771px;top:218px" width="11" height="18" viewBox="0 0 14 22"><path d="M7,1 L13,8.500 H1 Z M7,21 L13,13.500 H1 Z" fill="#8c8c8c"/></svg>
<!-- tab close -->
<svg class="a" style="left:484px;top:275px" width="13" height="12" viewBox="0 0 13 12"><path d="M1.500,1.500 L11.500,10.500 M11.500,1.500 L1.500,10.500" stroke="#d8d8d8" stroke-width="2.400"/></svg>

<!-- status bar details -->
<div class="a" style="left:155px;top:1558px;width:2084px;height:2px;background:#2a2a2a"></div>
<div class="a" style="left:155px;top:1560px;width:96px;height:31px;background:#393939"></div>
<div class="a" style="left:251px;top:1560px;width:367px;height:31px;background:#4b4b4b;border-left:1.500px solid #333;border-right:1.500px solid #333"></div>
<div class="t" style="left:176px;top:1565px;font-size:19.500px;color:#e2e2e2;letter-spacing:-.3px">84,7%</div>
<div class="t" style="left:344px;top:1567px;font-size:19.500px;color:#ececec;letter-spacing:-.05px">Doc: 2,86M/2,86M</div>
<svg class="a" style="left:599px;top:1565px" width="15" height="22" viewBox="0 0 15 22"><path d="M1,1 L14,11 L1,21 Z" fill="#efefef"/></svg>
<svg class="a" style="left:630px;top:1570px" width="8" height="12" viewBox="0 0 8 12"><path d="M7,0 L0,6 L7,12 Z" fill="#d8d8d8"/></svg>
<svg class="a" style="left:2186px;top:1570px" width="8" height="12" viewBox="0 0 8 12"><path d="M1,0 L8,6 L1,12 Z" fill="#d8d8d8"/></svg>
<div class="a" style="left:1140px;top:1562px;width:571px;height:24px;border-radius:5px;background:linear-gradient(#6e6e6e,#626262)"></div>
<div class="a" style="left:2205px;top:1558px;width:34px;height:34px;background:#4b4b4b"></div>
<!-- vscroll -->
<svg class="a" style="left:2216px;top:313px" width="12" height="7" viewBox="0 0 14 9"><path d="M7,0 L14,8 H0 Z" fill="#d8d8d8"/></svg>
<svg class="a" style="left:2216px;top:1540px" width="12" height="8" viewBox="0 0 14 9"><path d="M7,9 L14,1 H0 Z" fill="#d8d8d8"/></svg>
<div class="a" style="left:2210px;top:1000px;width:24px;height:134px;border-radius:4px;background:linear-gradient(90deg,#787878,#666)"></div>

<!--OPTS_END-->
<!-- right dock column -->
<div class="a" style="left:2238px;top:262px;width:6px;height:1330px;background:linear-gradient(90deg,#2c2c2c 0 2px,#464646 2px 4px,#2c2c2c 4px 6px)"></div>
<div class="a" style="left:2244px;top:262px;width:561px;height:1330px;background:#444"></div>
<div class="a" style="left:2244px;top:262px;width:561px;height:24px;background:#3d3d3d"></div>
<div class="a" style="left:2245px;top:287px;width:74px;height:1305px;background:#535353"></div>
<!-- right header arrows -->
<svg class="a" style="left:2295px;top:268px" width="16" height="11" viewBox="0 0 16 11"><path d="M7,0 L1,5.500 L7,11 Z M15,0 L9,5.500 L15,11 Z" fill="#c8c8c8"/></svg>
<svg class="a" style="left:2781px;top:268px" width="16" height="11" viewBox="0 0 16 11"><path d="M0,0 L6,5.500 L0,11 Z M8,0 L14,5.500 L8,11 Z" fill="#c8c8c8"/></svg>
<!-- icon column groups -->
<div class="a" style="left:2245px;top:287px;width:74px;height:136px;background:#535353;box-shadow:0 2px 0 #3c3c3c"></div>
<div class="a" style="left:2245px;top:425px;width:74px;height:136px;background:#535353;box-shadow:0 2px 0 #3c3c3c"></div>
<div class="a" style="left:2245px;top:563px;width:74px;height:79px;background:#535353;box-shadow:0 2px 0 #3c3c3c"></div>
<div class="a grp" style="left:2262px;top:293px"></div><div class="a grp" style="left:2262px;top:431px"></div><div class="a grp" style="left:2262px;top:569px"></div>
<style>.grp{width:39px;height:8px;background:repeating-linear-gradient(90deg,#2f2f2f 0 2px,transparent 2px 4px)}</style>
<div class="a" style="left:2318px;top:286px;width:6px;height:1306px;background:linear-gradient(90deg,#2c2c2c 0 2px,#464646 2px 4px,#2c2c2c 4px 6px)"></div>
<!-- history icon -->
<svg class="a" style="left:2268px;top:314px" width="34" height="38" viewBox="0 0 34 38"><g fill="none" stroke="#d4d4d4" stroke-width="2"><rect x="2" y="2" width="9" height="8"/><rect x="2" y="14" width="9" height="8"/></g><rect x="1" y="26" width="11" height="10" fill="#d4d4d4"/><path d="M19,4 C30,4 32,18 22,30 L19,28 C26,20 26,9 19,8 Z" fill="#d4d4d4"/><path d="M16,5 L24,1 L24,10 Z" fill="#d4d4d4"/></svg>
<!-- actions play -->
<svg class="a" style="left:2267px;top:373px" width="34" height="32" viewBox="0 0 34 32"><defs><linearGradient id="pg1" x1="0" y1="0" x2="1" y2="1"><stop offset="0" stop-color="#eee"/><stop offset="1" stop-color="#9a9a9a"/></linearGradient></defs><path d="M2,1 L32,16 L2,31 Z" fill="url(#pg1)"/></svg>
<!-- 3d icon -->
<svg class="a" style="left:2267px;top:451px" width="34" height="38" viewBox="0 0 34 38"><path d="M10,3 L19,7 L19,18 L10,23 L1,18 L1,7 Z" fill="#9c9c9c" stroke="#d0d0d0" stroke-width="1.600"/><path d="M1,7 L10,11 L19,7 M10,11 V23" stroke="#d8d8d8" stroke-width="1.600" fill="none"/><rect x="24" y="3" width="8" height="7" fill="#d0d0d0"/><rect x="24" y="13" width="8" height="7" fill="#d0d0d0"/><rect x="1" y="27" width="31" height="8" fill="#c4c4c4"/><path d="M24,29 H31 L27.500,34 Z" fill="#333"/></svg>
<!-- info -->
<svg class="a" style="left:2266px;top:509px" width="36" height="36" viewBox="0 0 36 36"><defs><radialGradient id="ig1" cx=".4" cy=".35" r=".8"><stop offset="0" stop-color="#ececec"/><stop offset="1" stop-color="#8e8e8e"/></radialGradient></defs><circle cx="18" cy="18" r="16.500" fill="url(#ig1)"/><circle cx="17.500" cy="9.500" r="3.200" fill="#333"/><path d="M13,15 H20.500 V26 H23 V29 H12.500 V26 H15 V18 H13 Z" fill="#333"/></svg>
<!-- clone source -->
<svg class="a" style="left:2266px;top:588px" width="36" height="38" viewBox="0 0 36 38"><g stroke="#cfcfcf" stroke-width="2"><path d="M0,4 H10 M0,9 H10 M0,14 H10"/></g><path d="M21,2 C25,2 27,5 27,8 C27,11 24,13 24,17 L24,21 L34,21 L34,29 L6,29 L6,21 L17,21 L17,17 C17,13 14,11 14,8 C14,5 17,2 21,2 Z" fill="#d4d4d4"/><rect x="6" y="33" width="28" height="3" fill="#d4d4d4"/></svg>
<!-- PANEL 1: histogram -->
<div class="a" style="left:2323px;top:287px;width:482px;height:34px;background:#3d3d3d"></div>
<div class="a" style="left:2323px;top:287px;width:127px;height:34px;background:#535353"></div>
<div class="a" style="left:2450px;top:287px;width:123px;height:32px;background:#424242;border-left:1.500px solid #323232;border-right:1.500px solid #323232;border-bottom:1.500px solid #323232"></div>
<div class="a" style="left:2573px;top:318px;width:232px;height:2px;background:#363636"></div>
<div class="a" style="left:2323px;top:321px;width:482px;height:191px;background:#535353"></div>
<div class="ptab" style="left:2338px;top:294px;letter-spacing:-0.1px">Histogram</div>
<div class="ptab2" style="left:2465px;top:294px;letter-spacing:-0.14px">Navigator</div>
<svg class="a pm" style="left:2768px;top:296px" width="30" height="15" viewBox="0 0 30 15"><path d="M0,2 H8 L4,7 Z" fill="#c4c4c4"/><path d="M11,1.500 H29 M11,5.500 H29 M11,9.500 H29 M11,13.500 H29" stroke="#d0d0d0" stroke-width="2"/></svg>
<div class="a" style="left:2333px;top:330px;width:395px;height:173px;background:#464646;border:2px solid #3e3e3e;box-shadow:0 0 0 1px #5e5e5e"></div>
<svg class="a" style="left:0;top:0" width="2880" height="600" viewBox="0 0 2880 600">
<polygon points="2671.6,500.0 2671.6,334.2 2672.7,334.2 2673.9,347.3 2675.6,334.2 2685.5,334.2 2686.7,336.2 2687.8,334.2 2714.6,334.2 2715.8,338.6 2716.9,334.2 2718.1,334.2 2719.3,430.2 2721.6,431.7 2722.2,500.0" fill="#e62e10"/>
<polygon points="2621.5,500.0 2621.5,334.2 2625.0,334.2 2626.2,350.2 2627.3,334.2 2640.7,334.2 2641.3,353.1 2642.5,334.2 2661.1,334.2 2662.2,336.2 2663.4,334.2 2671.6,334.2 2671.6,500.0" fill="#16f216"/>
<polygon points="2662.2,500.0 2663.4,469.5 2665.2,463.7 2666.3,382.2 2668.1,356.0 2669.8,334.2 2672.7,334.2 2673.9,347.3 2675.6,334.2 2681.4,334.2 2682.6,367.7 2685.5,382.2 2687.3,434.6 2689.6,422.9 2692.5,411.3 2694.8,402.0 2696.6,446.2 2700.1,460.8 2703.0,481.1 2705.9,500.0" fill="#e6f216"/>
<polygon points="2470.2,500.0 2470.2,498.6 2477.5,498.6 2478.9,500.0 2483.3,497.1 2489.1,498.0 2499.3,498.0 2506.6,495.7 2511.0,492.8 2514.4,486.9 2516.8,463.7 2519.1,411.3 2521.4,353.1 2523.2,334.2 2528.4,334.2 2529.6,347.3 2531.3,334.2 2535.4,334.2 2537.1,356.0 2539.5,334.2 2542.4,334.2 2544.1,396.7 2546.4,396.7 2547.3,431.7 2548.8,396.7 2549.9,334.2 2551.7,334.2 2553.4,356.0 2555.2,334.2 2559.2,334.2 2561.0,347.3 2564.5,338.0 2566.2,347.3 2569.1,356.0 2573.2,364.7 2575.5,376.4 2578.5,385.1 2581.9,388.0 2583.1,383.7 2584.9,414.2 2586.6,426.4 2588.9,411.3 2591.8,379.3 2593.6,380.7 2595.3,411.3 2598.2,430.2 2604.1,432.2 2605.5,438.9 2607.5,431.7 2609.9,396.7 2611.6,396.7 2613.4,411.3 2615.1,411.3 2616.9,434.6 2619.2,392.4 2621.5,390.9 2621.5,500.0" fill="#2222f0"/>
<polygon points="2599.7,500.0 2607.0,497.1 2612.8,492.8 2616.9,484.0 2619.2,469.5 2620.9,446.2 2622.1,390.9 2625.0,370.6 2627.3,367.7 2629.7,373.5 2632.6,396.7 2636.1,411.3 2639.0,422.9 2641.9,437.5 2645.4,446.2 2647.7,457.8 2651.8,460.8 2656.4,463.7 2659.3,469.5 2661.1,476.8 2662.8,500.0" fill="#16f2f2"/>
<polygon points="2641.9,500.0 2650.6,497.1 2655.0,492.8 2659.3,489.9 2662.8,478.2 2666.6,472.4 2669.5,486.9 2673.9,492.8 2678.2,496.3 2685.5,498.0 2697.2,498.6 2711.7,500.0" fill="#6b7a5a"/>
<polygon points="2682.6,500.0 2684.4,492.8 2686.1,500.0 2687.3,494.2 2689.0,500.0" fill="#e6f216"/>
</svg>
<!-- PANEL 2: libraries -->
<div class="a" style="left:2323px;top:512px;width:482px;height:6px;background:#3a3a3a"></div>
<div class="a" style="left:2323px;top:518px;width:482px;height:34px;background:#3d3d3d"></div>
<div class="a" style="left:2323px;top:518px;width:110px;height:34px;background:#535353"></div>
<div class="a" style="left:2433px;top:518px;width:147px;height:32px;background:#424242;border-left:1.500px solid #323232;border-right:1.500px solid #323232;border-bottom:1.500px solid #323232"></div>
<div class="a" style="left:2580px;top:549px;width:225px;height:2px;background:#363636"></div>
<div class="a" style="left:2323px;top:552px;width:482px;height:602px;background:#535353"></div>
<div class="ptab" style="left:2338px;top:525px;letter-spacing:-0.55px">Libraries</div>
<div class="ptab2" style="left:2447px;top:525px;letter-spacing:-0.38px">Adjustments</div>
<svg class="a pm" style="left:2768px;top:527px" width="30" height="15" viewBox="0 0 30 15"><path d="M0,2 H8 L4,7 Z" fill="#c4c4c4"/><path d="M11,1.500 H29 M11,5.500 H29 M11,9.500 H29 M11,13.500 H29" stroke="#d0d0d0" stroke-width="2"/></svg>
<svg class="a" style="left:2780px;top:1130px" width="22" height="22" viewBox="0 0 22 22"><g fill="#2e2e2e"><rect x="18" y="2" width="2" height="2"/><rect x="14" y="6" width="2" height="2"/><rect x="18" y="6" width="2" height="2"/><rect x="10" y="10" width="2" height="2"/><rect x="14" y="10" width="2" height="2"/><rect x="18" y="10" width="2" height="2"/><rect x="6" y="14" width="2" height="2"/><rect x="10" y="14" width="2" height="2"/><rect x="14" y="14" width="2" height="2"/><rect x="18" y="14" width="2" height="2"/><rect x="2" y="18" width="2" height="2"/><rect x="6" y="18" width="2" height="2"/><rect x="10" y="18" width="2" height="2"/><rect x="14" y="18" width="2" height="2"/><rect x="18" y="18" width="2" height="2"/></g></svg>
<!-- PANEL 3: layers -->
<div class="a" style="left:2323px;top:1154px;width:482px;height:6px;background:#3a3a3a"></div>
<div class="a" style="left:2323px;top:1160px;width:482px;height:34px;background:#3d3d3d"></div>
<div class="a" style="left:2323px;top:1160px;width:87px;height:34px;background:#535353"></div>
<div class="a" style="left:2410px;top:1160px;width:113px;height:32px;background:#424242;border-left:1.500px solid #323232;border-right:1.500px solid #323232;border-bottom:1.500px solid #323232"></div>
<div class="a" style="left:2523px;top:1160px;width:82px;height:32px;background:#424242;border-right:1.500px solid #323232;border-bottom:1.500px solid #323232"></div>
<div class="a" style="left:2605px;top:1191px;width:200px;height:2px;background:#363636"></div>
<div class="a" style="left:2323px;top:1194px;width:482px;height:398px;background:#535353"></div>
<div class="ptab" style="left:2338px;top:1167px;letter-spacing:-1.2px">Layers</div>
<div class="ptab2" style="left:2425px;top:1167px;letter-spacing:-1.05px">Channels</div>
<div class="ptab2" style="left:2539px;top:1167px;letter-spacing:-0.9px">Paths</div>
<svg class="a pm" style="left:2768px;top:1169px" width="30" height="15" viewBox="0 0 30 15"><path d="M0,2 H8 L4,7 Z" fill="#c4c4c4"/><path d="M11,1.500 H29 M11,5.500 H29 M11,9.500 H29 M11,13.500 H29" stroke="#d0d0d0" stroke-width="2"/></svg>
<!-- filter row -->
<div class="dd2" style="left:2333px;top:1206px;width:179px;height:33px;border-color:#3e3e3e;background:linear-gradient(#5c5c5c,#4e4e4e)"></div>
<svg class="a" style="left:2346px;top:1211px" width="24" height="24" viewBox="0 0 24 24"><circle cx="14" cy="9.500" r="6.500" fill="none" stroke="#a8a8a8" stroke-width="2.400"/><path d="M9.500,14.500 L3,21" stroke="#a8a8a8" stroke-width="3"/></svg>
<div class="t" style="left:2376px;top:1212px;font-size:20.500px;color:#a6a6a6;letter-spacing:-.4px">Kind</div>
<svg class="a ar" style="left:2491px;top:1214px" width="11" height="18" viewBox="0 0 14 22"><path d="M7,1 L13,8.500 H1 Z M7,21 L13,13.500 H1 Z" fill="#9a9a9a"/></svg>
<svg class="a" style="left:2533px;top:1209px" width="28" height="24" viewBox="0 0 28 24"><rect x="1.200" y="1.200" width="25.600" height="21.600" fill="none" stroke="#8d8d8d" stroke-width="2.400"/><path d="M4,19 L10,11 L14,16 L17,13 L23,19 Z" fill="#8d8d8d"/><circle cx="19" cy="8" r="2.400" fill="#8d8d8d"/></svg>
<svg class="a" style="left:2582px;top:1209px" width="24" height="24" viewBox="0 0 24 24"><circle cx="12" cy="12" r="10" fill="none" stroke="#8d8d8d" stroke-width="2.400"/><path d="M19,5 A10,10 0 0 1 5,19 Z" fill="#8d8d8d"/></svg>
<div class="t" style="left:2628px;top:1203px;font-size:36px;font-family:'Liberation Serif',serif;color:#8f8f8f">T</div>
<svg class="a" style="left:2678px;top:1209px" width="24" height="24" viewBox="0 0 24 24"><rect x="4" y="4" width="16" height="16" fill="none" stroke="#8d8d8d" stroke-width="2.200"/><g fill="#8d8d8d"><rect x="0" y="0" width="7" height="7"/><rect x="17" y="0" width="7" height="7"/><rect x="0" y="17" width="7" height="7"/><rect x="17" y="17" width="7" height="7"/></g><g fill="#535353"><rect x="2" y="2" width="3" height="3"/><rect x="19" y="2" width="3" height="3"/><rect x="2" y="19" width="3" height="3"/><rect x="19" y="19" width="3" height="3"/></g></svg>
<svg class="a" style="left:2727px;top:1208px" width="24" height="26" viewBox="0 0 24 26"><path d="M8,2 H17 L22,7 V22 H12" fill="none" stroke="#8d8d8d" stroke-width="2.200"/><path d="M16,2 V8 H22" fill="none" stroke="#8d8d8d" stroke-width="1.800"/><rect x="1" y="12" width="11" height="12" fill="#8d8d8d"/></svg>
<div class="a" style="left:2779px;top:1206px;width:17px;height:32px;border-radius:3px;background:linear-gradient(#5a5a5a,#3c3c3c 45%,#4a4a4a)"></div>
<div class="a" style="left:2323px;top:1249px;width:482px;height:2px;background:#444"></div>
<!-- blend row -->
<div class="dd2" style="left:2333px;top:1261px;width:257px;height:35px;border-color:#3e3e3e;background:linear-gradient(#5c5c5c,#4e4e4e)"></div>
<div class="t" style="left:2348px;top:1268px;font-size:20.500px;color:#a6a6a6;letter-spacing:-.5px">Normal</div>
<svg class="a ar" style="left:2569px;top:1270px" width="11" height="18" viewBox="0 0 14 22"><path d="M7,1 L13,8.500 H1 Z M7,21 L13,13.500 H1 Z" fill="#9a9a9a"/></svg>
<div class="t" style="left:2606px;top:1267px;font-size:20.500px;color:#a6a6a6;letter-spacing:-.25px">Opacity:</div>
<div class="a" style="left:2688px;top:1259px;width:106px;height:38px;background:#494949;border:1.500px solid #434343"></div>
<div class="a" style="left:2757px;top:1261px;width:36px;height:34px;background:#505050;border-left:1.500px solid #444"></div>
<div class="t" style="left:2698px;top:1268px;font-size:20px;color:#585858">100%</div>
<svg class="a" style="left:2771px;top:1275px" width="12" height="8" viewBox="0 0 12 8"><path d="M0,0 H12 L6,7 Z" fill="#909090"/></svg>
<div class="a" style="left:2323px;top:1306px;width:482px;height:2px;background:#444"></div>
<!-- lock row -->
<div class="t" style="left:2336px;top:1325px;font-size:20.500px;color:#a6a6a6;letter-spacing:-.5px">Lock:</div>
<svg class="a" style="left:2401px;top:1324px" width="23" height="23" viewBox="0 0 24 24"><rect width="24" height="24" fill="#8d8d8d"/><g fill="#6a6a6a"><rect x="0" y="0" width="8" height="8"/><rect x="16" y="0" width="8" height="8"/><rect x="8" y="8" width="8" height="8"/><rect x="0" y="16" width="8" height="8"/><rect x="16" y="16" width="8" height="8"/></g></svg>
<svg class="a" style="left:2441px;top:1319px" width="34" height="30" viewBox="0 0 34 30"><path d="M32,3 L29,1 L16,17 L19,20 Z" fill="#8f8f8f"/><path d="M2,26 C9,26 11,19 16,18 L19,22 C18,27 9,30 2,26 Z" fill="#8f8f8f"/></svg>
<svg class="a" style="left:2487px;top:1320px" width="28" height="28" viewBox="0 0 28 28"><path d="M14,3 V25 M3,14 H25" stroke="#8f8f8f" stroke-width="2.400"/><path d="M14,0 L19,6 H9 Z M14,28 L19,22 H9 Z M0,14 L6,9 V19 Z M28,14 L22,9 V19 Z" fill="#8f8f8f"/></svg>
<svg class="a" style="left:2535px;top:1320px" width="22" height="28" viewBox="0 0 22 28"><path d="M5,12 V8 C5,1 17,1 17,8 V12" fill="none" stroke="#8f8f8f" stroke-width="3"/><rect x="1" y="12" width="20" height="15" fill="#8f8f8f"/><rect x="9.500" y="16" width="3" height="6" fill="#535353"/></svg>
<div class="t" style="left:2649px;top:1324px;font-size:20.500px;color:#a6a6a6;letter-spacing:-.5px">Fill:</div>
<div class="a" style="left:2688px;top:1315px;width:106px;height:38px;background:#494949;border:1.500px solid #434343"></div>
<div class="a" style="left:2757px;top:1317px;width:36px;height:34px;background:#505050;border-left:1.500px solid #444"></div>
<div class="t" style="left:2698px;top:1324px;font-size:20px;color:#585858">100%</div>
<svg class="a" style="left:2771px;top:1331px" width="12" height="8" viewBox="0 0 12 8"><path d="M0,0 H12 L6,7 Z" fill="#909090"/></svg>
<div class="a" style="left:2323px;top:1363px;width:482px;height:2px;background:#3c3c3c"></div>
<!-- layer list -->
<div class="a" style="left:2323px;top:1365px;width:482px;height:188px;background:#484848"></div>
<div class="a" style="left:2776px;top:1365px;width:29px;height:188px;background:#4c4c4c"></div>
<div class="a" style="left:2323px;top:1366px;width:61px;height:78px;background:#4d4d4d;border-right:1.500px solid #3e3e3e"></div>
<div class="a" style="left:2385px;top:1366px;width:390px;height:78px;background:#6c7e97"></div>
<div class="a" style="left:2323px;top:1444px;width:452px;height:2px;background:#3e3e3e"></div>
<svg class="a" style="left:2341px;top:1392px" width="28" height="24" viewBox="0 0 28 24"><path d="M1,12 C6,3 22,3 27,12 C22,21 6,21 1,12 Z" fill="#e6e6e6"/><circle cx="14" cy="11" r="6.200" fill="#4d4d4d"/><circle cx="14" cy="11" r="3" fill="#e6e6e6"/><circle cx="12" cy="9" r="1.800" fill="#4d4d4d"/></svg>
<div class="a" style="left:2392px;top:1372px;width:65px;height:64px;background:#fff;border:2px solid #000"></div>
<svg class="a" style="left:2394px;top:1374px" width="61" height="60" viewBox="0 0 61 60"><path d="M27,6 H32 V24 L40,27 V42 H28 L22,32 C20,27 23,25 27,25 Z" fill="#e4b79b"/><path d="M28,42 H41 V52 H27 Z" fill="#efd18f"/><path d="M28,42 H41 V45 H28 Z" fill="#f3e6c6"/></svg>
<div class="t" style="left:2478px;top:1395px;font-size:21px;font-style:italic;color:#fff">Background</div>
<svg class="a" style="left:2718px;top:1389px" width="24" height="28" viewBox="0 0 24 28"><path d="M6,12 V8 C6,1 18,1 18,8 V12" fill="none" stroke="#e8e8e8" stroke-width="2.400"/><rect x="2.200" y="12.200" width="19.600" height="14" fill="none" stroke="#e8e8e8" stroke-width="2.400"/><rect x="10.500" y="16" width="3" height="6" fill="#e8e8e8"/></svg>
<!-- bottom bar -->
<div class="a" style="left:2323px;top:1553px;width:482px;height:2px;background:#3c3c3c"></div>
<div class="a" style="left:2323px;top:1555px;width:482px;height:37px;background:#535353"></div>
<svg class="a" style="left:2397px;top:1563px" width="30" height="22" viewBox="0 0 30 22"><rect x="2" y="5" width="15" height="12" rx="6" fill="none" stroke="#8f8f8f" stroke-width="3"/><rect x="13" y="5" width="15" height="12" rx="6" fill="none" stroke="#8f8f8f" stroke-width="3"/><path d="M9,11 H21" stroke="#8f8f8f" stroke-width="3"/></svg>
<div class="t" style="left:2452px;top:1557px;font-size:30px;font-style:italic;font-family:'Liberation Serif',serif;color:#8f8f8f">fx</div>
<svg class="a" style="left:2508px;top:1562px" width="27" height="22" viewBox="0 0 27 22"><rect width="27" height="22" fill="#8f8f8f"/><circle cx="13.500" cy="11" r="5" fill="#535353"/></svg>
<svg class="a" style="left:2562px;top:1561px" width="24" height="24" viewBox="0 0 24 24"><circle cx="12" cy="12" r="10" fill="none" stroke="#8f8f8f" stroke-width="2.400"/><path d="M19,5 A10,10 0 0 1 5,19 Z" fill="#8f8f8f"/></svg>
<svg class="a" style="left:2615px;top:1561px" width="28" height="22" viewBox="0 0 28 22"><path d="M1,2 H11 L14,6 H27 V22 H1 Z" fill="#8f8f8f"/></svg>
<svg class="a" style="left:2670px;top:1561px" width="24" height="24" viewBox="0 0 24 24"><path d="M3,1 H23 V22 H12 V11 H3 Z" fill="#8f8f8f"/><path d="M3,14 L10,22 H3 Z" fill="#8f8f8f"/></svg>
<svg class="a" style="left:2723px;top:1559px" width="24" height="28" viewBox="0 0 24 28"><path d="M8,3 C8,-0 16,-0 16,3" fill="none" stroke="#8f8f8f" stroke-width="2"/><rect x="1" y="4" width="22" height="4" fill="#8f8f8f"/><path d="M3,10 H21 L19,27 H5 Z" fill="#8f8f8f"/><path d="M8,12 V25 M12,12 V25 M16,12 V25" stroke="#535353" stroke-width="1.600"/></svg>

<!--RIGHT_END-->
</div>

</div>
<div id="dlg" class="a" style="left:0;top:0;width:2880px;height:1800px;pointer-events:none">
<style>
#dlg .t{color:#000;font-size:24px}
.btn{position:absolute;border-radius:4px;background:linear-gradient(#ffffff,#f4f4f4 55%,#e6e6e6);border:1.5px solid #8a8a8a;text-align:center;font-size:24px;color:#000;line-height:1}
.inp{position:absolute;background:#fff;border:1.5px solid #7c7c7c}
.sl{position:absolute;height:9px;border-radius:5px;box-shadow:0 0 0 1px rgba(120,120,120,.55)}
.u{text-decoration:underline;text-underline-offset:3px;text-decoration-thickness:1.5px}
</style>
<div class="a" style="left:1372px;top:387px;width:895px;height:714px;background:#dfdfdf;border:1.5px solid #6a6a6a;box-shadow:0 6px 24px rgba(0,0,0,.26),0 0 8px rgba(0,0,0,.14)"></div>
<div class="a" style="left:1374px;top:389px;width:892px;height:59px;background:#fff"></div>
<div class="t" style="left:1390px;top:406px">Hue/Saturation</div>
<svg class="a" style="left:2224px;top:404px" width="24" height="24" viewBox="0 0 24 24"><path d="M2,2 L22,22 M22,2 L2,22" stroke="#111" stroke-width="2" fill="none"/></svg>
<!-- preset -->
<div class="t" style="left:1398px;top:480px">Pr<span class="u">e</span>set:</div>
<div class="btn" style="left:1500px;top:472px;width:500px;height:40px;border-color:#9b9b9b;border-radius:5px"></div>
<div class="t" style="left:1519px;top:481px">Custom</div>
<svg class="a" style="left:1979px;top:482px" width="14" height="19" viewBox="0 0 18 24"><path d="M9,2 L15,9 L3,9 Z M9,22 L15,15 L3,15 Z" fill="#222"/></svg>
<svg class="a" style="left:2024px;top:478px" width="36" height="26" viewBox="0 0 36 26"><g fill="#333"><circle cx="12" cy="12" r="7.5"/><g stroke="#333" stroke-width="4.2"><path d="M12,1 V23 M1,12 H23 M4.2,4.2 L19.8,19.8 M19.8,4.2 L4.2,19.8"/></g></g><circle cx="12" cy="12" r="3.6" fill="#dfdfdf"/><path d="M25,16 L33,16 L29,21 Z" fill="#333"/></svg>
<div class="btn" style="left:2097px;top:469px;width:149px;height:43px;border:2.5px solid #7a7a7a;padding-top:8px">OK</div>
<div class="btn" style="left:2099px;top:531px;width:145px;height:39px;padding-top:7px">Cancel</div>
<!-- group box -->
<div class="a" style="left:1395px;top:568px;width:666px;height:360px;border:1.5px solid #a9a9a9;box-shadow:inset 1.5px 1.5px 0 #f4f4f4, 1.5px 1.5px 0 #f4f4f4"></div>
<div class="a" style="left:1421px;top:562px;width:300px;height:12px;background:#dfdfdf"></div>
<div class="btn" style="left:1436px;top:555px;width:270px;height:39px;border-color:#9b9b9b;border-radius:5px"></div>
<div class="t" style="left:1454px;top:563px">Master</div>
<svg class="a" style="left:1683px;top:565px" width="14" height="19" viewBox="0 0 18 24"><path d="M9,2 L15,9 L3,9 Z M9,22 L15,15 L3,15 Z" fill="#222"/></svg>
<!-- hue -->
<div class="t" style="left:1544px;top:627px"><span class="u">H</span>ue:</div>
<div class="inp" style="left:1836px;top:619px;width:80px;height:41px"></div>
<div class="t" style="left:1847px;top:628px">+180</div>
<div class="sl" style="left:1531px;top:685px;width:396px;background:linear-gradient(90deg,#f00,#ff0 16.6%,#0f0 33.3%,#0ff 50%,#00f 66.6%,#f0f 83.3%,#f00)"></div>
<svg class="a" style="left:1915px;top:684px" width="24" height="24" viewBox="0 0 24 24"><path d="M12,1.5 L21.5,12 V20 Q21.5,22.5 19,22.5 H5 Q2.5,22.5 2.5,20 V12 Z" fill="url(#thg)" stroke="#808080" stroke-width="1.600"/></svg>
<!-- sat -->
<div class="t" style="left:1544px;top:729px;letter-spacing:.55px">S<span class="u">a</span>turation:</div>
<div class="inp" style="left:1834px;top:719px;width:84px;height:45px;border:2.500px solid #b4d1f3;box-shadow:inset 0 0 0 1.500px #7b8794"></div>
<div class="a" style="left:1846px;top:726px;width:38px;height:28px;background:#0a63c6"></div>
<div class="t" style="left:1847px;top:730px;color:#fff">-10</div>
<div class="sl" style="left:1531px;top:787px;width:396px;background:linear-gradient(90deg,#7a7a7a,#b85252 48%,#e62222 80%,#ff0000)"></div>
<svg class="a" style="left:1697px;top:786px" width="24" height="24" viewBox="0 0 24 24"><path d="M12,1.5 L21.5,12 V20 Q21.5,22.5 19,22.5 H5 Q2.5,22.5 2.5,20 V12 Z" fill="url(#thg)" stroke="#808080" stroke-width="1.600"/></svg>
<!-- light -->
<div class="t" style="left:1544px;top:831px;letter-spacing:.45px">L<span class="u">i</span>ghtness:</div>
<div class="inp" style="left:1836px;top:822px;width:80px;height:42px"></div>
<div class="t" style="left:1847px;top:831px">0</div>
<div class="sl" style="left:1531px;top:888px;width:396px;background:linear-gradient(90deg,#000,#fff)"></div>
<svg class="a" style="left:1717px;top:888px" width="24" height="24" viewBox="0 0 24 24"><path d="M12,1.5 L21.5,12 V20 Q21.5,22.5 19,22.5 H5 Q2.5,22.5 2.5,20 V12 Z" fill="url(#thg)" stroke="#808080" stroke-width="1.600"/></svg>
<!-- checkboxes -->
<div class="btn" style="left:2098px;top:916px;width:29px;height:29px;border-radius:4px"></div>
<div class="t" style="left:2139px;top:918px;letter-spacing:-.55px">C<span class="u">o</span>lorize</div>
<div class="btn" style="left:2098px;top:964px;width:29px;height:29px;border-radius:4px"></div>
<svg class="a" style="left:2100px;top:962px" width="30" height="30" viewBox="0 0 30 30"><path d="M5,14 L11,22 L24,4" stroke="#111" stroke-width="3.2" fill="none"/></svg>
<div class="t" style="left:2138px;top:966px"><span class="u">P</span>review</div>
<svg class="a" style="left:1400px;top:952px" width="40" height="38" viewBox="0 0 40 38"><path d="M7,3 L1.500,7 L7,11 Z M28,3 L33.500,7 L28,11 Z" fill="#222"/><path d="M15,20 L15,5 C15,2.500 19.500,2.500 19.500,5 L19.500,13 C22,12 24,13 24,15 C26.500,14 28.500,15 28.500,17 C31,16.500 33,17.500 33,20 L33,27 C33,30 31,32 31,35 L17,35 C15,31 10,26 6,21 C4.500,18.500 7,16.500 9.500,18.500 Z" fill="#fff" stroke="#222" stroke-width="2" stroke-linejoin="round"/><path d="M24,15 V20 M28.500,17 V21" stroke="#222" stroke-width="1.600"/></svg>
<svg class="a" style="left:1920px;top:954px" width="36" height="34" viewBox="0 0 36 34"><path d="M29,2.500 C31.500,4 31.500,7.500 29,9.500 L25.500,13 L27,14.500 L24.500,17 L16,8.500 L18.500,6 L20,7.500 L23.500,4 C25.500,2 27.500,1.500 29,2.500 Z" fill="#7e7e7e"/><path d="M18.500,11.500 L22,15 L8,29 L3.500,31 L2.500,30 L4.500,25.500 Z" fill="#e8e8e8" stroke="#8a8a8a" stroke-width="1.600"/></svg><svg class="a" style="left:1972px;top:954px" width="36" height="34" viewBox="0 0 36 34"><path d="M29,2.500 C31.500,4 31.500,7.500 29,9.500 L25.500,13 L27,14.500 L24.500,17 L16,8.500 L18.500,6 L20,7.500 L23.500,4 C25.500,2 27.500,1.500 29,2.500 Z" fill="#7e7e7e"/><path d="M18.500,11.500 L22,15 L8,29 L3.500,31 L2.500,30 L4.500,25.500 Z" fill="#e8e8e8" stroke="#8a8a8a" stroke-width="1.600"/><path d="M16.500,29 H25.500 M21,24.500 V33.500" stroke="#7a7a7a" stroke-width="1.800"/></svg><svg class="a" style="left:2024px;top:954px" width="36" height="34" viewBox="0 0 36 34"><path d="M29,2.500 C31.500,4 31.500,7.500 29,9.500 L25.500,13 L27,14.500 L24.500,17 L16,8.500 L18.500,6 L20,7.500 L23.500,4 C25.500,2 27.500,1.500 29,2.500 Z" fill="#7e7e7e"/><path d="M18.500,11.500 L22,15 L8,29 L3.500,31 L2.500,30 L4.500,25.500 Z" fill="#e8e8e8" stroke="#8a8a8a" stroke-width="1.600"/><path d="M16.500,29 H25.500" stroke="#7a7a7a" stroke-width="1.800"/></svg>
<svg width="0" height="0" style="position:absolute"><defs><linearGradient id="thg" x1="0" y1="0" x2="0" y2="1"><stop offset="0" stop-color="#fafafa"/><stop offset="1" stop-color="#c9c9c9"/></linearGradient></defs></svg>
<!-- rainbow bars -->
<div class="a" style="left:1397px;top:1025px;width:846px;height:16px;background:linear-gradient(90deg,#0ff,#00f 16.6%,#f0f 33.3%,#f00 50%,#ff0 66.6%,#0f0 83.3%,#0ff)"></div>
<div class="a" style="left:1397px;top:1059px;width:846px;height:15px;background:linear-gradient(90deg,#f00,#ff0 16.6%,#0f0 33.3%,#0ff 50%,#00f 66.6%,#f0f 83.3%,#f00)"></div>
</div>

<!-- WINDOWS TASKBAR -->
<div id="tb" class="a" style="left:74px;top:1592px;width:2731px;height:80px;background:linear-gradient(90deg,#2b343f,#27313b 35%,#253038 70%,#263238);overflow:hidden">
<div class="a" style="left:-74px;top:-1592px;width:2880px;height:1800px">
<svg class="a" style="left:105px;top:1615px" width="34" height="34" viewBox="0 0 34 34"><path d="M0,4.700 L14,2.800 V16 H0 Z M16,2.500 L34,0 V16 H16 Z M0,18 H14 V31.200 L0,29.300 Z M16,18 H34 V34 L16,31.500 Z" fill="#fff"/></svg>
<svg class="a" style="left:194px;top:1608px" width="50" height="48" viewBox="0 0 50 48"><circle cx="29" cy="19" r="15.500" fill="none" stroke="#fff" stroke-width="4.600"/><path d="M18,31 L3,45" stroke="#fff" stroke-width="5.500" stroke-linecap="butt"/></svg>
<svg class="a" style="left:296px;top:1614px" width="36" height="34" viewBox="0 0 36 34"><g fill="none" stroke="#fff" stroke-width="2.300"><rect x="4" y="10" width="17" height="14"/><path d="M2,3.500 H23 M2,30.500 H23 M2.800,1 V6 M22.200,1 V6 M2.800,28 V33 M22.200,28 V33"/><path d="M31,1 V33" stroke-width="2"/></g><rect x="27.500" y="10" width="7" height="6" fill="#fff"/></svg>
<!-- explorer -->
<svg class="a" style="left:392px;top:1612px" width="48" height="40" viewBox="0 0 48 40"><path d="M2,3 H18 L22,8 H45 V34 H2 Z" fill="#f4b92e"/><path d="M2,12 H45 V36 H2 Z" fill="#fbd969"/><path d="M2,12 H45 V16 H2 Z" fill="#fce38c"/><rect x="13" y="23" width="22" height="14" fill="#2d8ad8"/><rect x="17" y="28" width="14" height="9" fill="#fbd969"/><rect x="13" y="23" width="22" height="5" fill="#56b0f2"/></svg>
<div class="a" style="left:376px;top:1668px;width:81px;height:4px;background:#a9bbe6"></div>
<!-- chrome -->
<svg class="a" style="left:488px;top:1606px" width="54" height="52" viewBox="0 0 54 52"><circle cx="24" cy="24" r="23" fill="#fff"/><path d="M24,24 L4.100,12.500 A23,23 0 0 1 43.900,12.500 Z" fill="#e33b2e"/><path d="M24,24 L43.900,12.500 A23,23 0 0 1 24,47 Z" fill="#f8c21b"/><path d="M24,24 L24,47 A23,23 0 0 1 4.100,12.500 Z" fill="#2da94f"/><circle cx="24" cy="24" r="10.500" fill="#fff"/><circle cx="24" cy="24" r="8.300" fill="#3f86f4"/><circle cx="40" cy="38" r="12" fill="#5c3a33" stroke="#d9c7c2" stroke-width="1.500"/><circle cx="40" cy="35" r="4.200" fill="none" stroke="#e9dcd8" stroke-width="1.800"/><path d="M32.500,45 C33,39 47,39 47.500,45" fill="none" stroke="#e9dcd8" stroke-width="1.800"/><circle cx="40" cy="38" r="8.800" fill="none" stroke="#e9dcd8" stroke-width="1.500"/></svg>
<!-- ps -->
<div class="a" style="left:564px;top:1592px;width:96px;height:80px;background:#59616f"></div>
<div class="a" style="left:564px;top:1668px;width:96px;height:4px;background:#a9bbe6"></div>
<div class="a" style="left:589px;top:1610px;width:44px;height:41px;background:#0c1840;border:3px solid #31c5f0"></div>
<div class="t" style="left:597px;top:1618px;font-size:28px;color:#31c5f0;-webkit-text-stroke:.6px #31c5f0;transform:scaleX(.9);transform-origin:0 0">Ps</div>
<!-- tray -->
<svg class="a" style="left:2323px;top:1623px" width="28" height="17" viewBox="0 0 28 17"><path d="M2,15 L14,3 L26,15" fill="none" stroke="#fff" stroke-width="2.800"/></svg>
<svg class="a" style="left:2386px;top:1614px" width="30" height="36" viewBox="0 0 30 36"><rect x="3.500" y="9" width="15" height="16" rx="3" fill="none" stroke="#fff" stroke-width="2.400"/><path d="M19,15 L25,11.500 V23 L19,19.500 Z" fill="none" stroke="#fff" stroke-width="2"/><path d="M5,5 C8,1.500 15,1.500 18,5 M5,30 C8,33.500 15,33.500 18,30" fill="none" stroke="#fff" stroke-width="2.200"/></svg>
<svg class="a" style="left:2452px;top:1620px" width="32" height="28" viewBox="0 0 32 28"><g fill="none" stroke="#fff" stroke-width="2.300"><path d="M2,26 A24,24 0 0 1 26,2"/><path d="M8,26 A18,18 0 0 1 26,8"/><path d="M14,26 A12,12 0 0 1 26,14"/><path d="M20,26 A6,6 0 0 1 26,20"/></g><circle cx="26" cy="25" r="2.600" fill="#fff"/></svg>
<svg class="a" style="left:2510px;top:1618px" width="34" height="28" viewBox="0 0 34 28"><path d="M2,9 H8 L15,2 V26 L8,19 H2 Z" fill="none" stroke="#fff" stroke-width="2.200" stroke-linejoin="round"/><path d="M21,8.500 L31,18.500 M31,8.500 L21,18.500" stroke="#fff" stroke-width="2.400"/></svg>
<div class="t" style="left:2604px;top:1602px;font-size:24px;color:#fff;transform:scaleX(.86);transform-origin:0 0">17:10</div>
<div class="t" style="left:2572px;top:1638px;font-size:24px;color:#fff;transform:scaleX(.96);transform-origin:0 0">22/07/2025</div>
<svg class="a" style="left:2723px;top:1616px" width="36" height="34" viewBox="0 0 36 34"><path d="M2,2 H34 V24 H23 L18,30 L13,24 H2 Z" fill="none" stroke="#fff" stroke-width="2.400"/></svg>
<div class="a" style="left:2796px;top:1592px;width:2px;height:80px;background:#8a9499"></div>
</div></div>
<!-- DOCK -->
<div class="a" style="left:810px;top:1707px;width:1260px;height:83px;border-radius:25px;background:linear-gradient(90deg,#1d3c4c,#1c3542 35%,#1a2832 70%,#171f28);box-shadow:inset 0 0 0 1.500px rgba(160,185,200,.33)"></div>
<div id="dock" class="a" style="left:0;top:0;width:2880px;height:1800px">
<style>
.di{position:absolute;top:1720px;width:50px;height:50px;border-radius:11.500px;overflow:hidden}
.dot{position:absolute;top:1778px;width:7px;height:7px;border-radius:50%;background:#93a6b6;margin-left:-1px}
</style>
<!-- finder -->
<div class="di" style="left:824px;background:linear-gradient(#3db0f9,#1a6fe0)"><div class="a" style="left:27px;top:0;width:23px;height:50px;background:linear-gradient(#f4f6fa,#cfd6e2)"></div>
<svg class="a" style="left:0;top:0" width="50" height="50" viewBox="0 0 50 50"><path d="M28,0 C23,9 21,18 20.500,28 H27 C27,36 28,44 30,50 H50 V0 Z" fill="#eef1f6"/><path d="M28,0 C23,9 21,18 20.500,28 H27 C27,36 28,44 30,50" fill="none" stroke="#1d2a44" stroke-width="1.400"/><path d="M13,14 V20 M36,14 V20" stroke="#1d2a44" stroke-width="2.200" stroke-linecap="round"/><path d="M9,33 C17,42 33,42 41,33" fill="none" stroke="#1d2a44" stroke-width="2" stroke-linecap="round"/></svg></div>
<!-- launchpad -->
<div class="di" style="left:891px;background:linear-gradient(#d5d6da,#a4a7ae)"><svg width="50" height="50" viewBox="0 0 50 50"><g><rect x="9" y="9" width="9" height="9" rx="2.500" fill="#6cd04c"/><rect x="20.500" y="9" width="9" height="9" rx="2.500" fill="#f5a623"/><rect x="32" y="9" width="9" height="9" rx="2.500" fill="#f56b2a"/><rect x="9" y="20.500" width="9" height="9" rx="2.500" fill="#e8372c"/><rect x="20.500" y="20.500" width="9" height="9" rx="2.500" fill="#b9bcc2"/><rect x="32" y="20.500" width="9" height="9" rx="2.500" fill="#ef4a6a"/><rect x="9" y="32" width="9" height="9" rx="2.500" fill="#a04fe0"/><rect x="20.500" y="32" width="9" height="9" rx="2.500" fill="#3b83f5"/><rect x="32" y="32" width="9" height="9" rx="2.500" fill="#35c5d8"/></g></svg></div>
<!-- windows app -->
<div class="di" style="left:957px;background:#030303"><svg width="50" height="50" viewBox="0 0 50 50"><rect x="3.800" y="7" width="22" height="14.500" rx="1" fill="#dcdcdc"/><rect x="28.700" y="13.300" width="18.700" height="21.700" rx="1" fill="#cfcfcf"/><rect x="3.800" y="27.400" width="22" height="15.400" rx="1" fill="#d6d6d6"/><rect x="11.500" y="18.500" width="7.500" height="6.500" rx="1" fill="#56d367"/><rect x="34.600" y="32.500" width="6.500" height="6" rx="1" fill="#a863e0"/><rect x="12.800" y="38.500" width="6.500" height="6" rx="1" fill="#45a7f5"/></svg></div>
<!-- chrome -->
<div class="di" style="left:1022px;background:#fff"><svg width="50" height="50" viewBox="0 0 50 50"><path d="M25,25 L7.700,15 A20,20 0 0 1 42.300,15 Z" fill="#e33b2e"/><path d="M25,25 L42.300,15 A20,20 0 0 1 25,45 Z" fill="#f8c21b"/><path d="M25,25 L25,45 A20,20 0 0 1 7.700,15 Z" fill="#2da94f"/><circle cx="25" cy="25" r="9.300" fill="#fff"/><circle cx="25" cy="25" r="7.300" fill="#3f86f4"/></svg></div>
<!-- calendar -->
<div class="di" style="left:1088px;background:#fff"><div class="a" style="left:0;top:0;width:50px;height:15px;background:#e8453c"></div><div class="t" style="left:0;width:50px;text-align:center;top:3px;font-size:10.500px;font-weight:bold;color:#fff">JUL</div><div class="t" style="left:0;width:50px;text-align:center;top:17px;font-size:30px;color:#3a3a3a;letter-spacing:-1px">22</div></div>
<!-- reminders -->
<div class="di" style="left:1155px;background:#fff"><svg width="50" height="50" viewBox="0 0 50 50"><circle cx="10.500" cy="13" r="3.300" fill="none" stroke="#3b83f5" stroke-width="1.500"/><circle cx="10.500" cy="13" r="1.600" fill="#3b83f5"/><circle cx="10.500" cy="25" r="3.300" fill="none" stroke="#e8453c" stroke-width="1.500"/><circle cx="10.500" cy="25" r="1.600" fill="#e8453c"/><circle cx="10.500" cy="37" r="3.300" fill="none" stroke="#f5a623" stroke-width="1.500"/><circle cx="10.500" cy="37" r="1.600" fill="#f5a623"/><path d="M18,13 H44 M18,25 H44 M18,37 H44" stroke="#d5d5d8" stroke-width="1.500"/></svg></div>
<!-- terminal -->
<div class="di" style="left:1220px;background:#0b0b0c;box-shadow:inset 0 0 0 2px #8d9095"><div class="t" style="left:9px;top:9px;font-size:12px;font-weight:bold;font-family:'Liberation Mono',monospace;color:#f0f0f0">&gt;_</div></div>
<!-- vscode -->
<div class="di" style="left:1287px;background:#fff"><svg width="50" height="50" viewBox="0 0 50 50"><path d="M35,8 L42,11.500 V38.500 L35,42 L15,26.500 L10,30.500 L7,28.500 L11.500,25 L7,21.500 L10,19.500 L15,23.500 Z M35,17 L24,25 L35,33 Z" fill="#2f86d6"/><path d="M35,8 L42,11.500 V38.500 L35,42 Z" fill="#1f6fc0"/></svg></div>
<!-- anydesk -->
<div class="di" style="left:1352px;background:#ee4b40"><svg width="50" height="50" viewBox="0 0 50 50"><path d="M18,13 L30,25 L18,37 L6,25 Z" fill="#fff"/><path d="M30.500,11.500 L44,25 L30.500,38.500 L26.800,34.800 L36.600,25 L26.800,15.200 Z" fill="#fff"/></svg></div>
<!-- sphere -->
<div class="a" style="left:1413px;top:1716px;width:58px;height:58px;border-radius:50%;background:radial-gradient(circle at 66% 46%,#cdbb9a 0%,#b09a78 22%,#6e5d45 45%,#2a2218 66%,#080706 85%)"></div>
<div class="a" style="left:1455px;top:1747px;width:9px;height:9px;border-radius:50%;background:radial-gradient(circle at 60% 40%,#8a7658,#3a2e20)"></div>
<div class="a" style="left:1413px;top:1725px;width:8px;height:8px;border-radius:50%;background:#3d3428"></div>
<!-- settings -->
<div class="di" style="left:1484px;background:linear-gradient(#b8b9bd,#77797e)"><svg width="50" height="50" viewBox="0 0 50 50"><circle cx="25" cy="25" r="18" fill="none" stroke="#3c3d41" stroke-width="4" stroke-dasharray="3.500 2.200"/><circle cx="25" cy="25" r="14.500" fill="#8d8f94" stroke="#4a4b50" stroke-width="2"/><circle cx="25" cy="25" r="5" fill="#5a5b60"/><path d="M25,25 L25,11 M25,25 L37,32 M25,25 L13,32" stroke="#4a4b50" stroke-width="2.600"/></svg></div>
<div class="a" style="left:1518px;top:1714px;width:21px;height:21px;border-radius:50%;background:#f0443a"></div>
<div class="t" style="left:1518px;top:1718px;width:21px;text-align:center;font-size:13px;color:#fff">1</div>
<!-- iphone mirroring -->
<div class="di" style="left:1550px;background:linear-gradient(#d8d9dc,#9b9da2)"><svg width="50" height="50" viewBox="0 0 50 50"><defs><linearGradient id="ipg" x1="0" y1="0" x2="1" y2="1"><stop offset="0" stop-color="#f6e4dc"/><stop offset=".45" stop-color="#ef8e78"/><stop offset=".6" stop-color="#e8e8f0"/><stop offset="1" stop-color="#3f7fc8"/></linearGradient></defs><rect x="15" y="5" width="21" height="40" rx="4.500" fill="#1b1b1d"/><rect x="17" y="7" width="17" height="36" rx="3" fill="url(#ipg)"/><rect x="22" y="9" width="7" height="2.500" rx="1.200" fill="#111"/></svg></div>
<div class="a" style="left:1624px;top:1719px;width:1.500px;height:58px;background:rgba(200,215,225,.35)"></div>
<!-- nomachine -->
<div class="di" style="left:1645px;background:linear-gradient(#ea4a44,#cf2426)"><svg width="50" height="50" viewBox="0 0 50 50"><g fill="#fff"><rect x="7.500" y="8.500" width="7" height="20.500"/><rect x="7.500" y="32" width="7" height="6.500"/><path d="M19,8.500 H44.500 V38.500 H37.500 V14.500 H35.200 V38.500 H28.300 V14.500 H26 V38.500 H19 Z"/></g></svg></div>
<!-- quicktime -->
<div class="di" style="left:1712px;background:linear-gradient(#2c2d31,#0c0c0e)"><svg width="50" height="50" viewBox="0 0 50 50"><defs><linearGradient id="qtg" x1="0" y1="0" x2="0" y2="1"><stop offset="0" stop-color="#7cc4ff"/><stop offset="1" stop-color="#1b6fe0"/></linearGradient></defs><path d="M30,30 L41,44" stroke="#aeb4be" stroke-width="6.500" stroke-linecap="round"/><circle cx="24" cy="24" r="18" fill="#b9bfc9"/><circle cx="24" cy="24" r="13" fill="url(#qtg)"/><path d="M24,24 m-5,-5 l12,12" stroke="#c9ced6" stroke-width="5" stroke-linecap="round"/></svg></div>
<!-- preview -->
<div class="di" style="left:1778px;background:#e9eef5"><svg width="50" height="50" viewBox="0 0 50 50"><rect x="3" y="3" width="44" height="44" rx="8" fill="#7ea8d8"/><rect x="3" y="3" width="44" height="18" fill="#9cc0ea"/><path d="M3,28 C14,22 22,32 33,26 C40,23 44,25 47,27 V47 H3 Z" fill="#e9e1cf"/><path d="M3,26 L20,22 L30,27 L47,23 V30 H3 Z" fill="#3f5f86"/><rect x="28" y="26" width="18" height="20" rx="3" fill="#1c1c1f"/><circle cx="37" cy="38" r="5.500" fill="#d9dde3"/><rect x="31" y="23" width="12" height="5" rx="1.500" fill="#2a2a2e"/></svg></div>
<div class="a" style="left:1850px;top:1719px;width:1.500px;height:58px;background:rgba(200,215,225,.35)"></div>
<!-- downloads stack -->
<svg class="a" style="left:1871px;top:1728px" width="56" height="42" viewBox="0 0 56 42"><rect x="5" y="0" width="46" height="34" fill="#c8c8c8"/><rect x="3" y="3" width="50" height="35" fill="#dedede"/><rect x="1" y="6" width="54" height="36" fill="#f4f4f4" stroke="#9a9a9a" stroke-width="1"/><rect x="1" y="6" width="54" height="6" fill="#3a3a3e"/><path d="M16,19 H40 M16,24 H40 M16,29 H40 M16,34 H34" stroke="#b0b0b0" stroke-width="1.400"/></svg>
<!-- doc with hand -->
<svg class="a" style="left:1938px;top:1716px" width="54" height="58" viewBox="0 0 54 58"><rect x="4" y="0" width="48" height="54" fill="#e4e4e4"/><rect x="1" y="3" width="50" height="55" fill="#fdfdfd" stroke="#c8c8c8" stroke-width="1"/><path d="M25,12 H29.500 V31 L36,33 V42 H26 L21.500,35 C20,31 22,30 25,31 Z" fill="#e3b59a"/><rect x="26" y="42" width="10.500" height="11" fill="#7a9ce0"/><rect x="26" y="42" width="10.500" height="3" fill="#c9d6f2"/></svg>
<!-- trash -->
<svg class="a" style="left:2006px;top:1714px" width="50" height="62" viewBox="0 0 50 62"><defs><linearGradient id="trg" x1="0" x2="1"><stop offset="0" stop-color="#4c4e52"/><stop offset=".45" stop-color="#74767a"/><stop offset="1" stop-color="#44464a"/></linearGradient></defs><path d="M5,14 H45 L40,58 C39,61 11,61 10,58 Z" fill="url(#trg)"/><ellipse cx="25" cy="14" rx="20.500" ry="5" fill="#6b6d71" stroke="#9a9ca0" stroke-width="1.500"/><path d="M9,12 L14,4 L22,8 L27,2 L33,8 L40,5 L41,13 C34,17 16,17 9,12 Z" fill="#f2f2f2"/><path d="M18,8 L23,11 L20,13 Z" fill="#3b83f5"/><path d="M28,6 L33,10 L29,12 Z" fill="#e8453c"/><path d="M24,9 L28,12 L25,14 Z" fill="#58c65a"/><path d="M33,9 L37,12 L34,13 Z" fill="#333"/></svg>
<div class="dot" style="left:846px"></div><div class="dot" style="left:1044px"></div><div class="dot" style="left:1110px"></div><div class="dot" style="left:1242px"></div><div class="dot" style="left:1308px"></div><div class="dot" style="left:1668px"></div>
</div>

<!--DOCK-->
</body></html>
